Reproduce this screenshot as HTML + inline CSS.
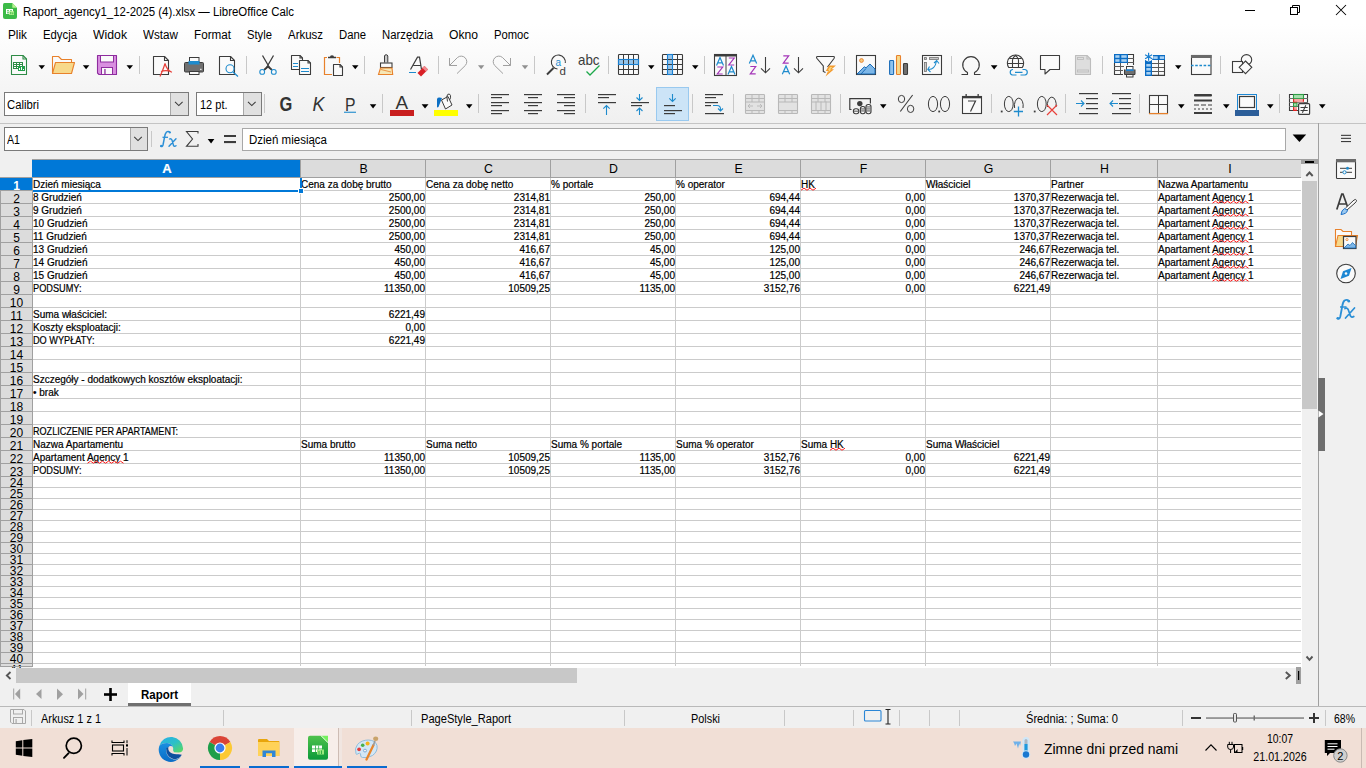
<!DOCTYPE html><html><head><meta charset="utf-8"><style>
*{margin:0;padding:0;box-sizing:border-box}
html,body{width:1366px;height:768px;overflow:hidden;background:#f0f0f0;font-family:"Liberation Sans", sans-serif;color:#000}
.a{position:absolute}
.t{position:absolute;white-space:nowrap;line-height:1}
svg{position:absolute;overflow:visible}
</style></head><body>
<div class="a" style="left:0;top:0;width:1366px;height:123px;background:linear-gradient(#ffffff 0px,#ffffff 24px,#f0f0f0 122px)"></div>
<div class="a" style="left:0;top:123px;width:1366px;height:1px;background:#c4c4c4"></div>
<div class="t" style="left:23px;top:6.34px;font-size:12px;color:#000;font-weight:normal;transform:scaleX(0.9522);transform-origin:left 0;">Raport_agency1_12-2025 (4).xlsx — LibreOffice Calc</div>
<div class="t" style="left:8px;top:29.34px;font-size:12px;color:#000;font-weight:normal;transform:scaleX(0.9822);transform-origin:left 0;">Plik</div>
<div class="t" style="left:43px;top:29.34px;font-size:12px;color:#000;font-weight:normal;transform:scaleX(0.9436);transform-origin:left 0;">Edycja</div>
<div class="t" style="left:93px;top:29.34px;font-size:12px;color:#000;font-weight:normal;transform:scaleX(1.0197);transform-origin:left 0;">Widok</div>
<div class="t" style="left:143px;top:29.34px;font-size:12px;color:#000;font-weight:normal;transform:scaleX(0.9722);transform-origin:left 0;">Wstaw</div>
<div class="t" style="left:194px;top:29.34px;font-size:12px;color:#000;font-weight:normal;transform:scaleX(0.9733);transform-origin:left 0;">Format</div>
<div class="t" style="left:247px;top:29.34px;font-size:12px;color:#000;font-weight:normal;transform:scaleX(0.9368);transform-origin:left 0;">Style</div>
<div class="t" style="left:288px;top:29.34px;font-size:12px;color:#000;font-weight:normal;transform:scaleX(0.9540);transform-origin:left 0;">Arkusz</div>
<div class="t" style="left:339px;top:29.34px;font-size:12px;color:#000;font-weight:normal;transform:scaleX(0.9412);transform-origin:left 0;">Dane</div>
<div class="t" style="left:382px;top:29.34px;font-size:12px;color:#000;font-weight:normal;transform:scaleX(0.9439);transform-origin:left 0;">Narzędzia</div>
<div class="t" style="left:449px;top:29.34px;font-size:12px;color:#000;font-weight:normal;transform:scaleX(1.0109);transform-origin:left 0;">Okno</div>
<div class="t" style="left:494px;top:29.34px;font-size:12px;color:#000;font-weight:normal;transform:scaleX(0.9368);transform-origin:left 0;">Pomoc</div>
<div class="a" style="left:4px;top:127px;width:144px;height:24px;background:#fff;border:1px solid #7a7a7a"></div>
<div class="a" style="left:130px;top:128px;width:17px;height:22px;background:#e0e0e0;border-left:1px solid #a8a8a8"></div>
<div class="t" style="left:7px;top:134.19px;font-size:12.3px;color:#000;font-weight:normal;transform:scaleX(0.8640);transform-origin:left 0;">A1</div>
<div class="a" style="left:151px;top:131px;width:1px;height:16px;background:#c8c8c8;"></div>
<div class="a" style="left:242px;top:128px;width:1044px;height:23px;background:#fff;border:1px solid #a8a8a8"></div>
<div class="t" style="left:249px;top:134.24px;font-size:12px;color:#000;font-weight:normal;transform:scaleX(0.9585);transform-origin:left 0;">Dzień miesiąca</div>
<div class="a" style="left:4px;top:92px;width:185px;height:24px;background:#fff;border:1px solid #7a7a7a"></div>
<div class="a" style="left:170px;top:93px;width:18px;height:22px;background:#e0e0e0;border-left:1px solid #a8a8a8"></div>
<div class="t" style="left:7px;top:98.84px;font-size:12px;color:#000;font-weight:normal;transform:scaleX(0.9407);transform-origin:left 0;">Calibri</div>
<div class="a" style="left:196px;top:92px;width:66px;height:24px;background:#fff;border:1px solid #7a7a7a"></div>
<div class="a" style="left:243px;top:93px;width:18px;height:22px;background:#e0e0e0;border-left:1px solid #a8a8a8"></div>
<div class="t" style="left:199.5px;top:98.84px;font-size:12px;color:#000;font-weight:normal;transform:scaleX(0.9157);transform-origin:left 0;">12 pt.</div>
<svg style="left:0;top:0" width="1366" height="160" viewBox="0 0 1366 160"><path d="M11.5 55.5H23.0L26.5 59.0V74.5H11.5Z" fill="#fafafa" stroke="#2e8b46" stroke-width="1.1" stroke-linejoin="round"/><path d="M23.0 55.5V59.0H26.5" fill="none" stroke="#2e8b46" stroke-width="1.1"/><rect x="13" y="62" width="10" height="7" fill="#2e8b46"/><rect x="14" y="63" width="2" height="1" fill="#fff"/><rect x="14" y="65" width="2" height="1" fill="#fff"/><rect x="14" y="67" width="2" height="1" fill="#fff"/><rect x="17" y="63" width="2" height="1" fill="#fff"/><rect x="17" y="65" width="2" height="1" fill="#fff"/><rect x="17" y="67" width="2" height="1" fill="#fff"/><rect x="20" y="63" width="2" height="1" fill="#fff"/><rect x="20" y="65" width="2" height="1" fill="#fff"/><rect x="20" y="67" width="2" height="1" fill="#fff"/><rect x="18" y="66" width="7" height="5" fill="#22a04a"/><rect x="19" y="68" width="1" height="2" fill="#fff"/><rect x="21" y="67" width="1" height="3" fill="#fff"/><rect x="23" y="69" width="1" height="1" fill="#fff"/><path d="M38.5 65.3H45L41.75 69.3Z" fill="#000"/><path d="M52.5 73.5V56.5H58.5L61.5 59.5H71.5V62" fill="#fafafa" stroke="#e8812b" stroke-width="1.1" stroke-linejoin="round"/><path d="M55.5 62.5H74.5L71.5 73.5H52.5Z" fill="#f7d98b" stroke="#e8812b" stroke-width="1.1" stroke-linejoin="round"/><path d="M82.8 65.2H89.4L86.1 69.2Z" fill="#000"/><path d="M97.5 55.5H116.5V74.5H99L97.5 73Z" fill="#d98fe0" stroke="#8e2d9e" stroke-width="1.1" stroke-linejoin="round"/><rect x="100.5" y="55.5" width="13" height="6.5" fill="#fafafa" stroke="#8e2d9e" stroke-width="1"/><rect x="101.5" y="67.5" width="11" height="7" fill="#fafafa" stroke="#8e2d9e" stroke-width="1"/><rect x="104.3" y="69" width="1.3" height="5.5" fill="#8e2d9e"/><path d="M126.5 65.2H133L129.75 69.2Z" fill="#000"/><rect x="139" y="56" width="1" height="18" fill="#c8c8c8"/><path d="M153.5 56.5H164.5L168.5 60.5V74.5H153.5Z" fill="#fafafa" stroke="#3c3c3c" stroke-width="1.1" stroke-linejoin="round"/><path d="M164.5 56.5V60.5H168.5" fill="none" stroke="#3c3c3c" stroke-width="1.1"/><path d="M165 63.5C164 67 162 72 160 76.5M165 63.5C166 67 168 71 172 72.3M161 71.5C164 70.5 168 70.3 171.5 72" fill="none" stroke="#e8403a" stroke-width="1.2"/><rect x="189.5" y="57.5" width="9.5" height="5" fill="#fafafa" stroke="#3c3c3c" stroke-width="1"/><rect x="184.5" y="62.5" width="19" height="9.5" rx="1" fill="#707070" stroke="#3c3c3c" stroke-width="1"/><rect x="188.5" y="61" width="11" height="3.5" fill="#1e8bcd"/><rect x="189.5" y="71.5" width="9.5" height="3" fill="#fafafa" stroke="#3c3c3c" stroke-width="1"/><rect x="200" y="68.8" width="1.6" height="1" fill="#fff"/><path d="M219.5 56.5H230.5L234.5 60.5V74.5H219.5Z" fill="#fafafa" stroke="#3c3c3c" stroke-width="1.1" stroke-linejoin="round"/><path d="M230.5 56.5V60.5H234.5" fill="none" stroke="#3c3c3c" stroke-width="1.1"/><circle cx="230" cy="68.8" r="4" fill="#fafafa" stroke="#1e8bcd" stroke-width="1.1"/><path d="M233 72L238 76.5" stroke="#1e8bcd" stroke-width="1.2"/><rect x="246" y="56" width="1" height="18" fill="#c8c8c8"/><path d="M262.5 55.5L270 68.5M273.5 55.5L266 68.5" stroke="#3c3c3c" stroke-width="1.3" fill="none"/><path d="M268 66.5L264 70M268 66.5L272 70" stroke="#3c3c3c" stroke-width="1.8"/><circle cx="262.2" cy="71.9" r="2.4" fill="#fafafa" stroke="#1e8bcd" stroke-width="1.1"/><circle cx="273.8" cy="71.9" r="2.4" fill="#fafafa" stroke="#1e8bcd" stroke-width="1.1"/><path d="M291.5 55.5H300.0L302.5 58.0V69.5H291.5Z" fill="#fafafa" stroke="#3c3c3c" stroke-width="1.1" stroke-linejoin="round"/><path d="M300.0 55.5V58.0H302.5" fill="none" stroke="#3c3c3c" stroke-width="1.1"/><rect x="293" y="63" width="5" height="1" fill="#1e8bcd"/><rect x="293" y="66" width="5" height="1" fill="#1e8bcd"/><path d="M299.5 60.5H308.0L310.5 63.0V74.5H299.5Z" fill="#fafafa" stroke="#3c3c3c" stroke-width="1.1" stroke-linejoin="round"/><path d="M308.0 60.5V63.0H310.5" fill="none" stroke="#3c3c3c" stroke-width="1.1"/><rect x="301" y="68" width="8" height="1" fill="#1e8bcd"/><rect x="301" y="71" width="8" height="1" fill="#1e8bcd"/><path d="M327 57.5H324.5V74.5H332M336.5 57.5H339.5V63" fill="none" stroke="#e8812b" stroke-width="1.2"/><path d="M328 57.5H336M330.5 57.5A1.5 1.5 0 0 1 333.5 57.5" fill="none" stroke="#3c3c3c" stroke-width="1.3"/><path d="M333.5 64.5H340.0L342.5 67.0V75.5H333.5Z" fill="#fafafa" stroke="#3c3c3c" stroke-width="1.1" stroke-linejoin="round"/><path d="M340.0 64.5V67.0H342.5" fill="none" stroke="#3c3c3c" stroke-width="1.1"/><path d="M352 65.2H358.5L355.25 69.2Z" fill="#000"/><rect x="364" y="56" width="1" height="18" fill="#c8c8c8"/><path d="M384.5 62.5V56A1.7 1.7 0 0 1 387.8 56V62.5" fill="#c8c8c8" stroke="#3c3c3c" stroke-width="1"/><rect x="380.5" y="63" width="11.5" height="4.5" fill="#fafafa" stroke="#3c3c3c" stroke-width="1.1"/><path d="M380.5 68H392L392.7 74.5H378.5Z" fill="#f6e7b6" stroke="#e8812b" stroke-width="1.1"/><path d="M381 69.5L391 72" stroke="#e8812b" stroke-width=".8"/><path d="M410.5 69.5L417.5 57.2H419.5L421.5 69.5M413.5 65.5H420.5" fill="none" stroke="#3c3c3c" stroke-width="1.2"/><rect x="409" y="72" width="7" height="1" fill="#1e8bcd"/><path d="M421 76.5L417.5 73L424.5 66L428 69.5Z" fill="#d92026"/><path d="M422 67.5L424.5 66L428 69.5L426 71.5Z" fill="#f08a8f"/><rect x="438" y="56" width="1" height="18" fill="#c8c8c8"/><path d="M449.5 58V65.5H457M449.5 65.5L457.5 57.5A5.6 5.6 0 0 1 465.4 65.4L457 73.6" fill="none" stroke="#a0a0a0" stroke-width="1"/><path d="M478 65.2H484.3L481.15 69.2Z" fill="#909090"/><path d="M510.5 58V65.5H503M510.5 65.5L502.5 57.5A5.6 5.6 0 0 0 494.6 65.4L503 73.6" fill="none" stroke="#a0a0a0" stroke-width="1"/><path d="M521.8 65.2H528.2L525.0 69.2Z" fill="#909090"/><rect x="534" y="56" width="1" height="18" fill="#c8c8c8"/><path d="M565.3 63A7 7 0 1 0 557.5 69" fill="none" stroke="#3c3c3c" stroke-width="1.1"/><path d="M547 74.5L553.5 68" stroke="#3c3c3c" stroke-width="2"/><text x="555.5" y="65.5" font-family="Liberation Sans" font-size="10" fill="#1e8bcd">a</text><text x="559.5" y="74.8" font-family="Liberation Sans" font-size="11.5" fill="#3c3c3c">d</text><text x="578" y="65" font-family="Liberation Sans" font-size="14.5" fill="#3c3c3c" textLength="21.5" lengthAdjust="spacingAndGlyphs">abc</text><path d="M586.5 71.5L590 75L599.5 65.5" fill="none" stroke="#1ca84a" stroke-width="1.3"/><rect x="608" y="56" width="1" height="18" fill="#c8c8c8"/><rect x="618" y="59" width="21" height="5" fill="#94c4ea"/><rect x="618.5" y="54.5" width="20" height="20" rx=".8" fill="none" stroke="#3c3c3c" stroke-width="1.1"/><rect x="623" y="54" width="1" height="21" fill="#3c3c3c"/><rect x="618" y="59" width="21" height="1" fill="#3c3c3c"/><rect x="628" y="54" width="1" height="21" fill="#3c3c3c"/><rect x="618" y="64" width="21" height="1" fill="#3c3c3c"/><rect x="633" y="54" width="1" height="21" fill="#3c3c3c"/><rect x="618" y="69" width="21" height="1" fill="#3c3c3c"/><rect x="618.5" y="59.5" width="20" height="5" fill="none" stroke="#1a7fd0" stroke-width="1.1"/><path d="M648 65.2H654.5L651.25 69.2Z" fill="#000"/><rect x="667" y="54" width="5" height="21" fill="#94c4ea"/><rect x="662.5" y="54.5" width="20" height="20" rx=".8" fill="none" stroke="#3c3c3c" stroke-width="1.1"/><rect x="667" y="54" width="1" height="21" fill="#3c3c3c"/><rect x="662" y="59" width="21" height="1" fill="#3c3c3c"/><rect x="672" y="54" width="1" height="21" fill="#3c3c3c"/><rect x="662" y="64" width="21" height="1" fill="#3c3c3c"/><rect x="677" y="54" width="1" height="21" fill="#3c3c3c"/><rect x="662" y="69" width="21" height="1" fill="#3c3c3c"/><rect x="667.5" y="54.5" width="5" height="20" fill="none" stroke="#1a7fd0" stroke-width="1.1"/><path d="M692 65.2H698.5L695.25 69.2Z" fill="#000"/><rect x="704" y="56" width="1" height="18" fill="#c8c8c8"/><rect x="714.5" y="54.5" width="22" height="21" fill="#fafafa" stroke="#3c3c3c" stroke-width="1.1"/><rect x="714" y="54" width="23" height="2.5" fill="#3c3c3c"/><rect x="725.5" y="56" width="1" height="19" fill="#3c3c3c"/><path d="M716.5 65.5L720.0 57.5L723.5 65.5M717.8 62.94H722.2" fill="none" stroke="#1e8bcd" stroke-width="1.2"/><path d="M717.3 67.0H722.7L717.3 74.0H722.7" fill="none" stroke="#a435b8" stroke-width="1.2"/><path d="M728.8 58.0H734.2L728.8 65.0H734.2" fill="none" stroke="#a435b8" stroke-width="1.2"/><path d="M728 74.5L731.5 66.5L735 74.5M729.3 71.94H733.7" fill="none" stroke="#1e8bcd" stroke-width="1.2"/><path d="M749.3 63.599999999999994L753.0 55.3L756.6999999999999 63.599999999999994M750.5999999999999 60.943999999999996H755.4" fill="none" stroke="#1e8bcd" stroke-width="1.2"/><path d="M750.3 66.5H755.7L750.3 73.8H755.7" fill="none" stroke="#a435b8" stroke-width="1.2"/><path d="M765.5 57V72.5M761 68.3L765.5 72.8L770 68.3" fill="none" stroke="#3c3c3c" stroke-width="1.1"/><path d="M783.3 55.8H788.7L783.3 63.099999999999994H788.7" fill="none" stroke="#a435b8" stroke-width="1.2"/><path d="M782.3 74.3L786.0 66L789.6999999999999 74.3M783.5999999999999 71.644H788.4" fill="none" stroke="#1e8bcd" stroke-width="1.2"/><path d="M798.5 57V72.5M794 68.3L798.5 72.8L803 68.3" fill="none" stroke="#3c3c3c" stroke-width="1.1"/><path d="M817.5 56.5H833.5Q835 56.5 834 58.5L827.5 67M825.5 72.5L823.3 71.5V66L816.8 58.3Q816 56.5 817.5 56.5" fill="#fafafa" stroke="#3c3c3c" stroke-width="1.1"/><path d="M829 65.5H836L831.5 69.3H834L825.5 76.5L828 71H825.8Z" fill="#f39a2e"/><path d="M830 67H832.5L830 69.5H831.5L828 72.5L829 70H828Z" fill="#f8d67c"/><rect x="844" y="56" width="1" height="18" fill="#c8c8c8"/><rect x="856.5" y="55.5" width="19" height="19" fill="#fafafa" stroke="#3c3c3c" stroke-width="1.1"/><circle cx="861.5" cy="60.5" r="1.9" fill="#f7c97a" stroke="#e8812b" stroke-width=".9"/><path d="M857 74L864.3 66.8L866 67.8L870 64L875 69V74Z" fill="#7db7e8" stroke="#1b6cb8" stroke-width="1"/><path d="M861 74L866 68.5" stroke="#1b6cb8" stroke-width="1"/><rect x="889.6" y="60.5" width="4" height="14" rx=".8" fill="#8fc3ee" stroke="#1b6cb8" stroke-width="1.1"/><rect x="896.5" y="55.5" width="4" height="19" rx=".8" fill="#f7d98b" stroke="#e8812b" stroke-width="1.1"/><rect x="903.5" y="63.5" width="4" height="11" rx=".8" fill="#707070" stroke="#3c3c3c" stroke-width="1.1"/><rect x="922.5" y="55.5" width="19" height="19" fill="#fafafa" stroke="#3c3c3c" stroke-width="1.1"/><rect x="924.6" y="57.6" width="1.8" height="1.8" fill="#c8c8c8" stroke="#707070" stroke-width=".8"/><rect x="929.5" y="57.6" width="9" height="1.8" fill="#c8c8c8" stroke="#707070" stroke-width=".8"/><rect x="924.6" y="62.5" width="1.8" height="9" fill="#c8c8c8" stroke="#707070" stroke-width=".8"/><path d="M928.5 69.5Q935 69.5 936.5 61M929.5 66.5L927.8 69.5L930.5 72M934 63L936.7 60.5L939 63.5" fill="none" stroke="#1e8bcd" stroke-width="1.1"/><rect x="951" y="56" width="1" height="18" fill="#c8c8c8"/><path d="M961.5 74.5H967.5V72.5A8.3 8.3 0 1 1 974.5 72.5V74.5H980.5" fill="none" stroke="#3c3c3c" stroke-width="1.1"/><path d="M990.8 65.2H997.5L994.15 69.4Z" fill="#000"/><path d="M1008.7 67.5A8.1 8.1 0 1 1 1022.3 67.5Z" fill="#fafafa" stroke="#3c3c3c" stroke-width="1.1"/><path d="M1012.5 67.5V60Q1013 57 1015.5 55.5Q1018 57 1018.5 60V67.5M1007.5 63.5H1023.5M1009.5 58.5H1021.5" fill="none" stroke="#3c3c3c" stroke-width="1.1"/><path d="M1013 69.5H1012.5A2.8 2.8 0 0 0 1012.5 75H1016.5M1022.5 69.5H1025A2.8 2.8 0 0 1 1025 75H1020.5M1015 72.3H1022.5" fill="none" stroke="#1e8bcd" stroke-width="1.2"/><path d="M1040.5 55.5H1059.5V69.5H1050L1045 74V69.5H1040.5Z" fill="#fafafa" stroke="#3c3c3c" stroke-width="1.1" stroke-linejoin="round"/><path d="M1075.5 55.5H1087.0L1090.5 59.0V74.5H1075.5Z" fill="#dedede" stroke="#bdbdbd" stroke-width="1.1" stroke-linejoin="round"/><path d="M1087.0 55.5V59.0H1090.5" fill="none" stroke="#bdbdbd" stroke-width="1.1"/><rect x="1077.5" y="57.5" width="6" height="2" fill="none" stroke="#bdbdbd" stroke-width=".9"/><rect x="1077.5" y="70" width="11" height="2" fill="none" stroke="#bdbdbd" stroke-width=".9"/><rect x="1102" y="56" width="1" height="18" fill="#c8c8c8"/><path d="M1127.5 54.5H1133.5V65M1114.5 63V74.5H1123" fill="none" stroke="#3c3c3c" stroke-width="1.1"/><rect x="1127" y="58" width="7" height="1" fill="#5a5a5a"/><rect x="1114" y="66" width="10" height="1" fill="#5a5a5a"/><rect x="1114" y="70" width="9" height="1" fill="#5a5a5a"/><rect x="1127" y="62" width="7" height="1" fill="#5a5a5a"/><rect x="1120" y="63" width="1" height="11.5" fill="#5a5a5a"/><rect x="1127" y="63" width="1" height="2" fill="#5a5a5a"/><rect x="1114" y="54" width="14" height="9" fill="#0a6cc4"/><rect x="1115.3" y="55.2" width="4.2" height="2.6" fill="#a9d1f2"/><rect x="1121.3" y="55.2" width="5.4" height="2.6" fill="#a9d1f2"/><rect x="1115.3" y="59.2" width="4.2" height="2.6" fill="#a9d1f2"/><rect x="1121.3" y="59.2" width="5.4" height="2.6" fill="#a9d1f2"/><rect x="1126.5" y="66.5" width="6.5" height="4" fill="#fafafa" stroke="#3c3c3c" stroke-width="1"/><path d="M1124.5 69.5V74.5H1135V69.5" fill="#707070" stroke="#3c3c3c" stroke-width="1"/><rect x="1126" y="69.3" width="7.5" height="1.7" fill="#1a7fd0"/><rect x="1126.5" y="74.5" width="6.5" height="2.5" fill="#fafafa" stroke="#3c3c3c" stroke-width="1"/><rect x="1152" y="60" width="13" height="15.8" fill="#fafafa"/><rect x="1152" y="63" width="13" height="1" fill="#5a5a5a"/><rect x="1152" y="67" width="13" height="1" fill="#5a5a5a"/><rect x="1152" y="71" width="13" height="1" fill="#5a5a5a"/><rect x="1158" y="60" width="1" height="16" fill="#5a5a5a"/><path d="M1152 75.4H1164.5V60" fill="none" stroke="#3c3c3c" stroke-width="1.1"/><rect x="1145" y="60" width="7" height="16" fill="#0a6cc4"/><rect x="1152" y="55" width="13" height="5" fill="#0a6cc4"/><rect x="1146.3" y="64" width="4.4" height="2.6" fill="#a9d1f2"/><rect x="1146.3" y="68" width="4.4" height="2.6" fill="#a9d1f2"/><rect x="1146.3" y="72" width="4.4" height="2.6" fill="#a9d1f2"/><rect x="1153.3" y="56.3" width="4.4" height="2.6" fill="#a9d1f2"/><rect x="1159.8" y="56.3" width="4.4" height="2.6" fill="#a9d1f2"/><circle cx="1148.6" cy="56.8" r="4.6" fill="#fafafa"/><path d="M1148.6 52.8V60.8M1145.1 54.8L1152.1 58.8M1145.1 58.8L1152.1 54.8" stroke="#1a7fd0" stroke-width="1.2"/><circle cx="1148.6" cy="56.8" r="1.2" fill="#1a7fd0"/><path d="M1175 65.3H1181.5L1178.25 69.3Z" fill="#000"/><rect x="1191.5" y="55.5" width="19.5" height="19" fill="#fafafa" stroke="#3c3c3c" stroke-width="1.1"/><rect x="1191" y="55" width="20.5" height="3" fill="#6a6a6a"/><path d="M1191 65.5H1212" stroke="#1e8bcd" stroke-width="1.3" stroke-dasharray="2.6 1.6"/><rect x="1220" y="56" width="1" height="18" fill="#c8c8c8"/><circle cx="1246.5" cy="59.8" r="5.2" fill="#fafafa" stroke="#3c3c3c" stroke-width="1.1"/><rect x="1232.5" y="61.5" width="10" height="11" fill="#fafafa" stroke="#3c3c3c" stroke-width="1.1"/><path d="M1245.5 61L1251.8 67.3L1245.5 73.6L1239.2 67.3Z" fill="#fafafa" stroke="#3c3c3c" stroke-width="1.1"/><rect x="264" y="94" width="1" height="19" fill="#c8c8c8"/><text x="279.4" y="111" font-family="Liberation Sans" font-weight="bold" font-size="19.3" fill="#333" textLength="12.8" lengthAdjust="spacingAndGlyphs">G</text><text x="312.5" y="111" font-family="Liberation Sans" font-style="italic" font-size="19.3" fill="#333" textLength="12" lengthAdjust="spacingAndGlyphs">K</text><text x="345" y="110.6" font-family="Liberation Sans" font-size="18.5" fill="#333" textLength="10.5" lengthAdjust="spacingAndGlyphs">P</text><rect x="344" y="111.7" width="12" height="1.1" fill="#1e8bcd"/><path d="M369.8 104.2H376.3L373.05 108.4Z" fill="#000"/><rect x="382" y="94" width="1" height="19" fill="#c8c8c8"/><text x="395.6" y="108.8" font-family="Liberation Sans" font-size="19" fill="#333" textLength="12.6" lengthAdjust="spacingAndGlyphs">A</text><rect x="390" y="110" width="24" height="6" fill="#c81e1e"/><path d="M421.6 104.2H428.5L425.05 108.4Z" fill="#000"/><rect x="434" y="110" width="24" height="6" fill="#ffff00"/><path d="M437 107.5V99Q437.5 97.5 439.5 97.6L442 98L441 100.5L438.5 107Z" fill="#0c6fc4"/><path d="M441.5 100L448 96.5L452 105L445.5 109Z" fill="#fafafa" stroke="#3c3c3c" stroke-width="1"/><path d="M447.5 101.5L446.8 96.5Q447.5 93.5 449.3 94Q451 94.8 450.5 97.8L449.5 100" fill="none" stroke="#3c3c3c" stroke-width="1"/><path d="M466 104.2H472.5L469.25 108.4Z" fill="#000"/><rect x="478" y="94" width="1" height="19" fill="#c8c8c8"/><rect x="491" y="94" width="18" height="1.2" fill="#3c3c3c"/><rect x="491" y="97" width="11" height="1.2" fill="#3c3c3c"/><rect x="491" y="102" width="18" height="1.2" fill="#3c3c3c"/><rect x="491" y="105" width="11" height="1.2" fill="#3c3c3c"/><rect x="491" y="110" width="18" height="1.2" fill="#3c3c3c"/><rect x="491" y="113" width="11" height="1.2" fill="#3c3c3c"/><rect x="524" y="94" width="18" height="1.2" fill="#3c3c3c"/><rect x="528" y="97" width="10" height="1.2" fill="#3c3c3c"/><rect x="524" y="102" width="18" height="1.2" fill="#3c3c3c"/><rect x="528" y="105" width="10" height="1.2" fill="#3c3c3c"/><rect x="524" y="110" width="18" height="1.2" fill="#3c3c3c"/><rect x="528" y="113" width="10" height="1.2" fill="#3c3c3c"/><rect x="557" y="94" width="18" height="1.2" fill="#3c3c3c"/><rect x="564" y="97" width="11" height="1.2" fill="#3c3c3c"/><rect x="557" y="102" width="18" height="1.2" fill="#3c3c3c"/><rect x="564" y="105" width="11" height="1.2" fill="#3c3c3c"/><rect x="557" y="110" width="18" height="1.2" fill="#3c3c3c"/><rect x="564" y="113" width="11" height="1.2" fill="#3c3c3c"/><rect x="585" y="94" width="1" height="19" fill="#c8c8c8"/><rect x="598" y="94" width="18" height="1.2" fill="#3c3c3c"/><rect x="598" y="97" width="11" height="1.2" fill="#3c3c3c"/><rect x="598" y="102" width="18" height="1.2" fill="#3c3c3c"/><path d="M606.5 115V105.5M603.3 108.7L606.5 105.5L609.7 108.7" fill="none" stroke="#1e8bcd" stroke-width="1.1"/><rect x="631" y="102" width="18" height="1.2" fill="#3c3c3c"/><rect x="631" y="105" width="11" height="1.2" fill="#3c3c3c"/><path d="M639.5 94V100.5M636.5 97.5L639.5 100.5L642.5 97.5M639.5 115V108M636.5 111L639.5 108L642.5 111" fill="none" stroke="#1e8bcd" stroke-width="1.1"/><rect x="656.5" y="87.5" width="32" height="33" fill="#cce4f7" stroke="#99c9ef" stroke-width="1"/><rect x="664" y="105" width="11" height="1.2" fill="#3c3c3c"/><rect x="664" y="110" width="18" height="1.2" fill="#3c3c3c"/><rect x="664" y="113" width="11" height="1.2" fill="#3c3c3c"/><path d="M672.5 94V101.5M669.3 98.3L672.5 101.5L675.7 98.3" fill="none" stroke="#1e8bcd" stroke-width="1.1"/><rect x="692" y="94" width="1" height="19" fill="#c8c8c8"/><rect x="705" y="94" width="18" height="1.2" fill="#3c3c3c"/><rect x="705" y="97" width="11" height="1.2" fill="#3c3c3c"/><rect x="705" y="102" width="13" height="1.2" fill="#3c3c3c"/><rect x="705" y="105" width="6" height="1.2" fill="#3c3c3c"/><rect x="705" y="113" width="19" height="1.2" fill="#3c3c3c"/><path d="M713 105.5H717Q720.5 105.5 720.5 109V111M718 108.5L720.5 111L723 108.5" fill="none" stroke="#1e8bcd" stroke-width="1.1"/><rect x="733" y="94" width="1" height="19" fill="#c8c8c8"/><rect x="745.5" y="94.5" width="19" height="19" rx=".8" fill="#e2e2e2" stroke="#b8b8b8" stroke-width="1.1"/><rect x="745" y="98" width="20" height="1" fill="#b8b8b8"/><rect x="745" y="101.5" width="20" height="1" fill="#b8b8b8"/><rect x="745" y="110" width="20" height="1" fill="#b8b8b8"/><rect x="751.5" y="94" width="1" height="8" fill="#b8b8b8"/><rect x="751.5" y="110" width="1" height="4" fill="#b8b8b8"/><rect x="758.5" y="94" width="1" height="8" fill="#b8b8b8"/><rect x="758.5" y="110" width="1" height="4" fill="#b8b8b8"/><path d="M748 106H753M757 106H762M750 104L748 106L750 108M760 104L762 106L760 108" fill="none" stroke="#b8b8b8" stroke-width=".9"/><rect x="778.5" y="94.5" width="19" height="19" rx=".8" fill="#e2e2e2" stroke="#b8b8b8" stroke-width="1.1"/><rect x="778" y="98" width="20" height="1" fill="#b8b8b8"/><rect x="778" y="101.5" width="20" height="1" fill="#b8b8b8"/><rect x="778" y="110" width="20" height="1" fill="#b8b8b8"/><rect x="784.5" y="94" width="1" height="8" fill="#b8b8b8"/><rect x="784.5" y="110" width="1" height="4" fill="#b8b8b8"/><rect x="791.5" y="94" width="1" height="8" fill="#b8b8b8"/><rect x="791.5" y="110" width="1" height="4" fill="#b8b8b8"/><rect x="811.5" y="94.5" width="19" height="19" rx=".8" fill="#e2e2e2" stroke="#b8b8b8" stroke-width="1.1"/><rect x="811" y="98" width="20" height="1" fill="#b8b8b8"/><rect x="811" y="101.5" width="20" height="1" fill="#b8b8b8"/><rect x="811" y="110" width="20" height="1" fill="#b8b8b8"/><rect x="817.5" y="94" width="1" height="8" fill="#b8b8b8"/><rect x="817.5" y="110" width="1" height="4" fill="#b8b8b8"/><rect x="824.5" y="94" width="1" height="8" fill="#b8b8b8"/><rect x="824.5" y="110" width="1" height="4" fill="#b8b8b8"/><rect x="815.5" y="101.5" width="1" height="9" fill="#b8b8b8"/><rect x="820.5" y="101.5" width="1" height="9" fill="#b8b8b8"/><rect x="825.5" y="101.5" width="1" height="9" fill="#b8b8b8"/><rect x="840" y="94" width="1" height="19" fill="#c8c8c8"/><path d="M851.5 109.5H849.8V98.7H870.4V103.5" fill="none" stroke="#3c3c3c" stroke-width="1.2"/><circle cx="859.8" cy="103.6" r="2.7" fill="#3c3c3c"/><rect x="853.4" y="108.7" width="5.399999999999977" height="5.099999999999994" rx="2.2" fill="#fafafa" stroke="#3c3c3c" stroke-width="1.1"/><rect x="853.9" y="110.7" width="4.399999999999977" height=".9" fill="#3c3c3c"/><rect x="860.4" y="106.5" width="4.800000000000068" height="7.299999999999997" rx="2.2" fill="#fafafa" stroke="#3c3c3c" stroke-width="1.1"/><rect x="860.9" y="108.5" width="3.800000000000068" height=".9" fill="#3c3c3c"/><rect x="860.9" y="110.5" width="3.800000000000068" height=".9" fill="#3c3c3c"/><rect x="866" y="104.5" width="5" height="9.299999999999997" rx="2.2" fill="#fafafa" stroke="#3c3c3c" stroke-width="1.1"/><rect x="866.5" y="106.5" width="4" height=".9" fill="#3c3c3c"/><rect x="866.5" y="108.5" width="4" height=".9" fill="#3c3c3c"/><rect x="866.5" y="110.5" width="4" height=".9" fill="#3c3c3c"/><path d="M880 104.2H886.5L883.25 108.4Z" fill="#000"/><ellipse cx="901.5" cy="99" rx="3.2" ry="3.6" fill="none" stroke="#3c3c3c" stroke-width="1"/><ellipse cx="910.6" cy="108.9" rx="3.2" ry="3.6" fill="none" stroke="#3c3c3c" stroke-width="1"/><path d="M900.3 111.5L912.6 95" stroke="#3c3c3c" stroke-width="1.1"/><ellipse cx="933" cy="104" rx="4.6" ry="7.6" fill="none" stroke="#3c3c3c" stroke-width="1"/><ellipse cx="945" cy="104" rx="4.6" ry="7.6" fill="none" stroke="#3c3c3c" stroke-width="1"/><rect x="938.3" y="110.6" width="1.8" height="1.8" fill="#3c3c3c"/><rect x="962.5" y="96.5" width="19" height="17" fill="#fafafa" stroke="#3c3c3c" stroke-width="1.1"/><rect x="962" y="96" width="20" height="2.3" fill="#3c3c3c"/><rect x="965.5" y="94" width="1.3" height="3.5" fill="#3c3c3c"/><rect x="977.5" y="94" width="1.3" height="3.5" fill="#3c3c3c"/><path d="M968 101H975.5L970.5 111.5" fill="none" stroke="#3c3c3c" stroke-width="1.2"/><rect x="991" y="94" width="1" height="19" fill="#c8c8c8"/><rect x="1000.8" y="110.6" width="1.8" height="1.8" fill="#3c3c3c"/><ellipse cx="1008.8" cy="104" rx="4.4" ry="7.6" fill="none" stroke="#3c3c3c" stroke-width="1"/><path d="M1014.6 108A4.4 7.6 0 1 1 1023 108" fill="none" stroke="#3c3c3c" stroke-width="1"/><path d="M1018.5 106.5V116.5M1013.8 111.5H1023" stroke="#1e8bcd" stroke-width="1.3"/><rect x="1033.8" y="110.6" width="1.8" height="1.8" fill="#3c3c3c"/><ellipse cx="1041.8" cy="104" rx="4.4" ry="7.6" fill="none" stroke="#3c3c3c" stroke-width="1"/><path d="M1047.6 107A4.4 7.6 0 1 1 1056 107" fill="none" stroke="#3c3c3c" stroke-width="1"/><path d="M1047 105L1057 115M1057 105L1047 115" stroke="#e8403a" stroke-width="1.2"/><rect x="1065" y="94" width="1" height="19" fill="#c8c8c8"/><rect x="1079" y="93" width="19" height="1.2" fill="#3c3c3c"/><rect x="1079" y="113" width="19" height="1.2" fill="#3c3c3c"/><rect x="1086" y="98" width="12" height="1.2" fill="#3c3c3c"/><rect x="1086" y="103" width="12" height="1.2" fill="#3c3c3c"/><rect x="1086" y="108" width="12" height="1.2" fill="#3c3c3c"/><path d="M1076 103.5H1084M1081 100.5L1084 103.5L1081 106.5" fill="none" stroke="#1e8bcd" stroke-width="1.1"/><rect x="1112" y="93" width="19" height="1.2" fill="#3c3c3c"/><rect x="1112" y="113" width="19" height="1.2" fill="#3c3c3c"/><rect x="1119" y="98" width="12" height="1.2" fill="#3c3c3c"/><rect x="1119" y="103" width="12" height="1.2" fill="#3c3c3c"/><rect x="1119" y="108" width="12" height="1.2" fill="#3c3c3c"/><path d="M1110 103.5H1118M1113 100.5L1110 103.5L1113 106.5" fill="none" stroke="#1e8bcd" stroke-width="1.1"/><rect x="1139" y="94" width="1" height="19" fill="#c8c8c8"/><rect x="1149.5" y="95.5" width="18" height="18" fill="#fafafa" stroke="#3c3c3c" stroke-width="1.1"/><rect x="1158" y="95" width="1" height="19" fill="#3c3c3c"/><rect x="1149" y="104" width="19" height="1" fill="#3c3c3c"/><rect x="1149" y="113" width="19" height="1.2" fill="#e8812b"/><path d="M1178 104.2H1184.6L1181.3 108.4Z" fill="#000"/><rect x="1194" y="94" width="18" height="2.5" rx="1" fill="#3c3c3c"/><rect x="1194" y="99.5" width="18" height="2" fill="#3c3c3c"/><path d="M1194 105H1212" stroke="#3c3c3c" stroke-width="1.1" stroke-dasharray="5 2"/><path d="M1194 109H1212" stroke="#3c3c3c" stroke-width="1" stroke-dasharray="2 2"/><rect x="1194" y="112" width="18" height="2" fill="#3c3c3c"/><path d="M1223 104.2H1229.6L1226.3 108.4Z" fill="#000"/><rect x="1237.5" y="94.5" width="19" height="16" fill="#fafafa" stroke="#1e88d4" stroke-width="1"/><rect x="1239.5" y="96.5" width="15" height="11" fill="#fafafa" stroke="#3c3c3c" stroke-width="1.2"/><rect x="1235" y="110" width="24" height="6" fill="#2c5e99"/><path d="M1267 104.2H1273.6L1270.3 108.4Z" fill="#000"/><rect x="1279" y="94" width="1" height="19" fill="#c8c8c8"/><path d="M1307.5 106V94.5H1289.5V110.5H1298" fill="#fafafa" stroke="#3c3c3c" stroke-width="1.1"/><rect x="1289" y="98" width="19" height="1" fill="#6a6a6a"/><rect x="1289" y="102" width="19" height="1" fill="#6a6a6a"/><rect x="1289" y="106" width="19" height="1" fill="#6a6a6a"/><rect x="1293.5" y="94.5" width="10" height="4.2" fill="#a6e0ad" stroke="#2e9c45" stroke-width="1.1"/><rect x="1293.5" y="99" width="10" height="3.3" fill="#f9a5a5"/><path d="M1293.6 99V102.4H1297M1303.4 99V101.8" fill="none" stroke="#e02020" stroke-width="1.1"/><rect x="1293.5" y="103" width="3.5" height="3.3" fill="#a6e0ad" stroke="#2e9c45" stroke-width="1"/><rect x="1293.5" y="107" width="3.5" height="3.5" fill="#f9a5a5"/><path d="M1293.6 107V110.4H1297" fill="none" stroke="#e02020" stroke-width="1.1"/><rect x="1298.6" y="103.6" width="11" height="10.8" rx="1" fill="#fafafa" stroke="#3c3c3c" stroke-width="1.2"/><path d="M1300.5 107.5H1307.7M1300.5 110.5H1307.7M1305.8 105.3L1302.4 112.8" stroke="#3c3c3c" stroke-width="1.05"/><path d="M1319 104.2H1325.6L1322.3 108.4Z" fill="#000"/><path d="M170 132.3Q168.3 130.8 166.5 132Q165 133.5 164.5 137.5L163 145Q162.5 147 160.8 146.2" fill="none" stroke="#2b8fd6" stroke-width="1.5" stroke-linecap="round"/><circle cx="169.8" cy="132.5" r="1.1" fill="#2b8fd6"/><circle cx="161.2" cy="145.9" r="1.1" fill="#2b8fd6"/><path d="M162.5 137.3H168" stroke="#2b8fd6" stroke-width="1.3"/><path d="M169.5 139Q171 138.2 172 140L173.5 145.5Q174.5 147 176 145.8M176 138.8L169 146.3" fill="none" stroke="#2b8fd6" stroke-width="1.4" stroke-linecap="round"/><path d="M198 133.5V131.5H186.5L192.5 139L186.5 146.3H198V144" fill="none" stroke="#3c3c3c" stroke-width="1.1"/><path d="M207.7 139H214.4L211.05 143.4Z" fill="#000"/><rect x="224" y="135" width="12" height="2" fill="#3c3c3c"/><rect x="224" y="141" width="12" height="2.1" fill="#3c3c3c"/><path d="M1292.6 134.6H1306.2L1299.4 142Z" fill="#000"/><path d="M134.2 136.8L138 140.60000000000002L141.8 136.8" fill="none" stroke="#3a3a3a" stroke-width="1.05"/><path d="M175.0 101.8L178.8 105.6L182.60000000000002 101.8" fill="none" stroke="#3a3a3a" stroke-width="1.05"/><path d="M248.0 101.8L251.8 105.6L255.60000000000002 101.8" fill="none" stroke="#3a3a3a" stroke-width="1.05"/></svg>
<div class="a" style="left:1318px;top:123px;width:1px;height:583px;background:#a0a0a0;"></div>
<div class="a" style="left:32px;top:159px;width:1269px;height:1px;background:#a0a0a0;"></div>
<div class="a" style="left:32px;top:160px;width:1269px;height:17px;background:#dcdcdc;"></div>
<div class="a" style="left:32px;top:160px;width:268px;height:17px;background:#0078d7;"></div>
<div class="a" style="left:0px;top:177px;width:1301px;height:1px;background:#a0a0a0;"></div>
<div class="a" style="left:300px;top:159px;width:1px;height:18px;background:#a0a0a0;"></div>
<div class="a" style="left:425px;top:159px;width:1px;height:18px;background:#a0a0a0;"></div>
<div class="a" style="left:550px;top:159px;width:1px;height:18px;background:#a0a0a0;"></div>
<div class="a" style="left:675px;top:159px;width:1px;height:18px;background:#a0a0a0;"></div>
<div class="a" style="left:800px;top:159px;width:1px;height:18px;background:#a0a0a0;"></div>
<div class="a" style="left:925px;top:159px;width:1px;height:18px;background:#a0a0a0;"></div>
<div class="a" style="left:1050px;top:159px;width:1px;height:18px;background:#a0a0a0;"></div>
<div class="a" style="left:1157px;top:159px;width:1px;height:18px;background:#a0a0a0;"></div>
<div class="t" style="left:-33.0px;width:400px;text-align:center;top:162.40px;font-size:13px;color:#fff;font-weight:bold;-webkit-text-stroke:0.2px #fff;">A</div>
<div class="t" style="left:163.5px;width:400px;text-align:center;top:162.89px;font-size:12.3px;color:#000;font-weight:normal;">B</div>
<div class="t" style="left:288.5px;width:400px;text-align:center;top:162.89px;font-size:12.3px;color:#000;font-weight:normal;">C</div>
<div class="t" style="left:413.5px;width:400px;text-align:center;top:162.89px;font-size:12.3px;color:#000;font-weight:normal;">D</div>
<div class="t" style="left:538.5px;width:400px;text-align:center;top:162.89px;font-size:12.3px;color:#000;font-weight:normal;">E</div>
<div class="t" style="left:663.5px;width:400px;text-align:center;top:162.89px;font-size:12.3px;color:#000;font-weight:normal;">F</div>
<div class="t" style="left:788.5px;width:400px;text-align:center;top:162.89px;font-size:12.3px;color:#000;font-weight:normal;">G</div>
<div class="t" style="left:904.5px;width:400px;text-align:center;top:162.89px;font-size:12.3px;color:#000;font-weight:normal;">H</div>
<div class="t" style="left:1030.0px;width:400px;text-align:center;top:162.89px;font-size:12.3px;color:#000;font-weight:normal;">I</div>
<div class="a" style="left:32px;top:178px;width:1270px;height:490px;background:#fff;"></div>
<div class="a" style="left:0px;top:178px;width:32px;height:488px;background:#dcdcdc;"></div>
<div class="a" style="left:0px;top:177px;width:1px;height:489px;background:#a0a0a0;"></div>
<div class="a" style="left:32px;top:177px;width:1px;height:489px;background:#a0a0a0;"></div>
<div class="a" style="left:0px;top:178px;width:32px;height:12px;background:#0078d7;"></div>
<div class="a" style="left:0px;top:190px;width:32px;height:1px;background:#a0a0a0;"></div>
<div class="a" style="left:33px;top:190px;width:1268px;height:1px;background:#cbcbcb;"></div>
<div class="a" style="left:0px;top:203px;width:32px;height:1px;background:#a0a0a0;"></div>
<div class="a" style="left:33px;top:203px;width:1268px;height:1px;background:#cbcbcb;"></div>
<div class="a" style="left:0px;top:216px;width:32px;height:1px;background:#a0a0a0;"></div>
<div class="a" style="left:33px;top:216px;width:1268px;height:1px;background:#cbcbcb;"></div>
<div class="a" style="left:0px;top:229px;width:32px;height:1px;background:#a0a0a0;"></div>
<div class="a" style="left:33px;top:229px;width:1268px;height:1px;background:#cbcbcb;"></div>
<div class="a" style="left:0px;top:242px;width:32px;height:1px;background:#a0a0a0;"></div>
<div class="a" style="left:33px;top:242px;width:1268px;height:1px;background:#cbcbcb;"></div>
<div class="a" style="left:0px;top:255px;width:32px;height:1px;background:#a0a0a0;"></div>
<div class="a" style="left:33px;top:255px;width:1268px;height:1px;background:#cbcbcb;"></div>
<div class="a" style="left:0px;top:268px;width:32px;height:1px;background:#a0a0a0;"></div>
<div class="a" style="left:33px;top:268px;width:1268px;height:1px;background:#cbcbcb;"></div>
<div class="a" style="left:0px;top:281px;width:32px;height:1px;background:#a0a0a0;"></div>
<div class="a" style="left:33px;top:281px;width:1268px;height:1px;background:#cbcbcb;"></div>
<div class="a" style="left:0px;top:294px;width:32px;height:1px;background:#a0a0a0;"></div>
<div class="a" style="left:33px;top:294px;width:1268px;height:1px;background:#cbcbcb;"></div>
<div class="a" style="left:0px;top:307px;width:32px;height:1px;background:#a0a0a0;"></div>
<div class="a" style="left:33px;top:307px;width:1268px;height:1px;background:#cbcbcb;"></div>
<div class="a" style="left:0px;top:320px;width:32px;height:1px;background:#a0a0a0;"></div>
<div class="a" style="left:33px;top:320px;width:1268px;height:1px;background:#cbcbcb;"></div>
<div class="a" style="left:0px;top:333px;width:32px;height:1px;background:#a0a0a0;"></div>
<div class="a" style="left:33px;top:333px;width:1268px;height:1px;background:#cbcbcb;"></div>
<div class="a" style="left:0px;top:346px;width:32px;height:1px;background:#a0a0a0;"></div>
<div class="a" style="left:33px;top:346px;width:1268px;height:1px;background:#cbcbcb;"></div>
<div class="a" style="left:0px;top:359px;width:32px;height:1px;background:#a0a0a0;"></div>
<div class="a" style="left:33px;top:359px;width:1268px;height:1px;background:#cbcbcb;"></div>
<div class="a" style="left:0px;top:372px;width:32px;height:1px;background:#a0a0a0;"></div>
<div class="a" style="left:33px;top:372px;width:1268px;height:1px;background:#cbcbcb;"></div>
<div class="a" style="left:0px;top:385px;width:32px;height:1px;background:#a0a0a0;"></div>
<div class="a" style="left:33px;top:385px;width:1268px;height:1px;background:#cbcbcb;"></div>
<div class="a" style="left:0px;top:398px;width:32px;height:1px;background:#a0a0a0;"></div>
<div class="a" style="left:33px;top:398px;width:1268px;height:1px;background:#cbcbcb;"></div>
<div class="a" style="left:0px;top:411px;width:32px;height:1px;background:#a0a0a0;"></div>
<div class="a" style="left:33px;top:411px;width:1268px;height:1px;background:#cbcbcb;"></div>
<div class="a" style="left:0px;top:424px;width:32px;height:1px;background:#a0a0a0;"></div>
<div class="a" style="left:33px;top:424px;width:1268px;height:1px;background:#cbcbcb;"></div>
<div class="a" style="left:0px;top:437px;width:32px;height:1px;background:#a0a0a0;"></div>
<div class="a" style="left:33px;top:437px;width:1268px;height:1px;background:#cbcbcb;"></div>
<div class="a" style="left:0px;top:450px;width:32px;height:1px;background:#a0a0a0;"></div>
<div class="a" style="left:33px;top:450px;width:1268px;height:1px;background:#cbcbcb;"></div>
<div class="a" style="left:0px;top:463px;width:32px;height:1px;background:#a0a0a0;"></div>
<div class="a" style="left:33px;top:463px;width:1268px;height:1px;background:#cbcbcb;"></div>
<div class="a" style="left:0px;top:476px;width:32px;height:1px;background:#a0a0a0;"></div>
<div class="a" style="left:33px;top:476px;width:1268px;height:1px;background:#cbcbcb;"></div>
<div class="a" style="left:0px;top:487px;width:32px;height:1px;background:#a0a0a0;"></div>
<div class="a" style="left:33px;top:487px;width:1268px;height:1px;background:#cbcbcb;"></div>
<div class="a" style="left:0px;top:498px;width:32px;height:1px;background:#a0a0a0;"></div>
<div class="a" style="left:33px;top:498px;width:1268px;height:1px;background:#cbcbcb;"></div>
<div class="a" style="left:0px;top:509px;width:32px;height:1px;background:#a0a0a0;"></div>
<div class="a" style="left:33px;top:509px;width:1268px;height:1px;background:#cbcbcb;"></div>
<div class="a" style="left:0px;top:520px;width:32px;height:1px;background:#a0a0a0;"></div>
<div class="a" style="left:33px;top:520px;width:1268px;height:1px;background:#cbcbcb;"></div>
<div class="a" style="left:0px;top:531px;width:32px;height:1px;background:#a0a0a0;"></div>
<div class="a" style="left:33px;top:531px;width:1268px;height:1px;background:#cbcbcb;"></div>
<div class="a" style="left:0px;top:542px;width:32px;height:1px;background:#a0a0a0;"></div>
<div class="a" style="left:33px;top:542px;width:1268px;height:1px;background:#cbcbcb;"></div>
<div class="a" style="left:0px;top:553px;width:32px;height:1px;background:#a0a0a0;"></div>
<div class="a" style="left:33px;top:553px;width:1268px;height:1px;background:#cbcbcb;"></div>
<div class="a" style="left:0px;top:564px;width:32px;height:1px;background:#a0a0a0;"></div>
<div class="a" style="left:33px;top:564px;width:1268px;height:1px;background:#cbcbcb;"></div>
<div class="a" style="left:0px;top:575px;width:32px;height:1px;background:#a0a0a0;"></div>
<div class="a" style="left:33px;top:575px;width:1268px;height:1px;background:#cbcbcb;"></div>
<div class="a" style="left:0px;top:586px;width:32px;height:1px;background:#a0a0a0;"></div>
<div class="a" style="left:33px;top:586px;width:1268px;height:1px;background:#cbcbcb;"></div>
<div class="a" style="left:0px;top:597px;width:32px;height:1px;background:#a0a0a0;"></div>
<div class="a" style="left:33px;top:597px;width:1268px;height:1px;background:#cbcbcb;"></div>
<div class="a" style="left:0px;top:608px;width:32px;height:1px;background:#a0a0a0;"></div>
<div class="a" style="left:33px;top:608px;width:1268px;height:1px;background:#cbcbcb;"></div>
<div class="a" style="left:0px;top:619px;width:32px;height:1px;background:#a0a0a0;"></div>
<div class="a" style="left:33px;top:619px;width:1268px;height:1px;background:#cbcbcb;"></div>
<div class="a" style="left:0px;top:630px;width:32px;height:1px;background:#a0a0a0;"></div>
<div class="a" style="left:33px;top:630px;width:1268px;height:1px;background:#cbcbcb;"></div>
<div class="a" style="left:0px;top:641px;width:32px;height:1px;background:#a0a0a0;"></div>
<div class="a" style="left:33px;top:641px;width:1268px;height:1px;background:#cbcbcb;"></div>
<div class="a" style="left:0px;top:652px;width:32px;height:1px;background:#a0a0a0;"></div>
<div class="a" style="left:33px;top:652px;width:1268px;height:1px;background:#cbcbcb;"></div>
<div class="a" style="left:0px;top:663px;width:32px;height:1px;background:#a0a0a0;"></div>
<div class="a" style="left:33px;top:663px;width:1268px;height:1px;background:#cbcbcb;"></div>
<div class="a" style="left:300px;top:178px;width:1px;height:488px;background:#cbcbcb;"></div>
<div class="a" style="left:425px;top:178px;width:1px;height:488px;background:#cbcbcb;"></div>
<div class="a" style="left:550px;top:178px;width:1px;height:488px;background:#cbcbcb;"></div>
<div class="a" style="left:675px;top:178px;width:1px;height:488px;background:#cbcbcb;"></div>
<div class="a" style="left:800px;top:178px;width:1px;height:488px;background:#cbcbcb;"></div>
<div class="a" style="left:925px;top:178px;width:1px;height:488px;background:#cbcbcb;"></div>
<div class="a" style="left:1050px;top:178px;width:1px;height:488px;background:#cbcbcb;"></div>
<div class="a" style="left:1157px;top:178px;width:1px;height:488px;background:#cbcbcb;"></div>
<div class="t" style="left:-183.5px;width:400px;text-align:center;top:179.84px;font-size:12px;color:#fff;font-weight:bold;">1</div>
<div class="t" style="left:-183.5px;width:400px;text-align:center;top:192.84px;font-size:12px;color:#000;font-weight:normal;">2</div>
<div class="t" style="left:-183.5px;width:400px;text-align:center;top:205.84px;font-size:12px;color:#000;font-weight:normal;">3</div>
<div class="t" style="left:-183.5px;width:400px;text-align:center;top:218.84px;font-size:12px;color:#000;font-weight:normal;">4</div>
<div class="t" style="left:-183.5px;width:400px;text-align:center;top:231.84px;font-size:12px;color:#000;font-weight:normal;">5</div>
<div class="t" style="left:-183.5px;width:400px;text-align:center;top:244.84px;font-size:12px;color:#000;font-weight:normal;">6</div>
<div class="t" style="left:-183.5px;width:400px;text-align:center;top:257.84px;font-size:12px;color:#000;font-weight:normal;">7</div>
<div class="t" style="left:-183.5px;width:400px;text-align:center;top:270.84px;font-size:12px;color:#000;font-weight:normal;">8</div>
<div class="t" style="left:-183.5px;width:400px;text-align:center;top:283.84px;font-size:12px;color:#000;font-weight:normal;">9</div>
<div class="t" style="left:-183.5px;width:400px;text-align:center;top:296.84px;font-size:12px;color:#000;font-weight:normal;">10</div>
<div class="t" style="left:-183.5px;width:400px;text-align:center;top:309.84px;font-size:12px;color:#000;font-weight:normal;">11</div>
<div class="t" style="left:-183.5px;width:400px;text-align:center;top:322.84px;font-size:12px;color:#000;font-weight:normal;">12</div>
<div class="t" style="left:-183.5px;width:400px;text-align:center;top:335.84px;font-size:12px;color:#000;font-weight:normal;">13</div>
<div class="t" style="left:-183.5px;width:400px;text-align:center;top:348.84px;font-size:12px;color:#000;font-weight:normal;">14</div>
<div class="t" style="left:-183.5px;width:400px;text-align:center;top:361.84px;font-size:12px;color:#000;font-weight:normal;">15</div>
<div class="t" style="left:-183.5px;width:400px;text-align:center;top:374.84px;font-size:12px;color:#000;font-weight:normal;">16</div>
<div class="t" style="left:-183.5px;width:400px;text-align:center;top:387.84px;font-size:12px;color:#000;font-weight:normal;">17</div>
<div class="t" style="left:-183.5px;width:400px;text-align:center;top:400.84px;font-size:12px;color:#000;font-weight:normal;">18</div>
<div class="t" style="left:-183.5px;width:400px;text-align:center;top:413.84px;font-size:12px;color:#000;font-weight:normal;">19</div>
<div class="t" style="left:-183.5px;width:400px;text-align:center;top:426.84px;font-size:12px;color:#000;font-weight:normal;">20</div>
<div class="t" style="left:-183.5px;width:400px;text-align:center;top:439.84px;font-size:12px;color:#000;font-weight:normal;">21</div>
<div class="t" style="left:-183.5px;width:400px;text-align:center;top:452.84px;font-size:12px;color:#000;font-weight:normal;">22</div>
<div class="t" style="left:-183.5px;width:400px;text-align:center;top:465.84px;font-size:12px;color:#000;font-weight:normal;">23</div>
<div class="t" style="left:-183.5px;width:400px;text-align:center;top:476.84px;font-size:12px;color:#000;font-weight:normal;">24</div>
<div class="t" style="left:-183.5px;width:400px;text-align:center;top:487.84px;font-size:12px;color:#000;font-weight:normal;">25</div>
<div class="t" style="left:-183.5px;width:400px;text-align:center;top:498.84px;font-size:12px;color:#000;font-weight:normal;">26</div>
<div class="t" style="left:-183.5px;width:400px;text-align:center;top:509.84px;font-size:12px;color:#000;font-weight:normal;">27</div>
<div class="t" style="left:-183.5px;width:400px;text-align:center;top:520.84px;font-size:12px;color:#000;font-weight:normal;">28</div>
<div class="t" style="left:-183.5px;width:400px;text-align:center;top:531.84px;font-size:12px;color:#000;font-weight:normal;">29</div>
<div class="t" style="left:-183.5px;width:400px;text-align:center;top:542.84px;font-size:12px;color:#000;font-weight:normal;">30</div>
<div class="t" style="left:-183.5px;width:400px;text-align:center;top:553.84px;font-size:12px;color:#000;font-weight:normal;">31</div>
<div class="t" style="left:-183.5px;width:400px;text-align:center;top:564.84px;font-size:12px;color:#000;font-weight:normal;">32</div>
<div class="t" style="left:-183.5px;width:400px;text-align:center;top:575.84px;font-size:12px;color:#000;font-weight:normal;">33</div>
<div class="t" style="left:-183.5px;width:400px;text-align:center;top:586.84px;font-size:12px;color:#000;font-weight:normal;">34</div>
<div class="t" style="left:-183.5px;width:400px;text-align:center;top:597.84px;font-size:12px;color:#000;font-weight:normal;">35</div>
<div class="t" style="left:-183.5px;width:400px;text-align:center;top:608.84px;font-size:12px;color:#000;font-weight:normal;">36</div>
<div class="t" style="left:-183.5px;width:400px;text-align:center;top:619.84px;font-size:12px;color:#000;font-weight:normal;">37</div>
<div class="t" style="left:-183.5px;width:400px;text-align:center;top:630.84px;font-size:12px;color:#000;font-weight:normal;">38</div>
<div class="t" style="left:-183.5px;width:400px;text-align:center;top:641.84px;font-size:12px;color:#000;font-weight:normal;">39</div>
<div class="t" style="left:-183.5px;width:400px;text-align:center;top:652.84px;font-size:12px;color:#000;font-weight:normal;">40</div>
<div class="t" style="left:-183.5px;width:400px;text-align:center;top:663.84px;font-size:12px;color:#000;font-weight:normal;">41</div>
<div class="t" style="left:33px;top:179.53px;font-size:10px;color:#000;font-weight:normal;-webkit-text-stroke:0.2px #000;">Dzień miesiąca</div>
<div class="t" style="left:301px;top:179.53px;font-size:10px;color:#000;font-weight:normal;-webkit-text-stroke:0.2px #000;">Cena za dobę brutto</div>
<div class="t" style="left:426px;top:179.53px;font-size:10px;color:#000;font-weight:normal;-webkit-text-stroke:0.2px #000;">Cena za dobę netto</div>
<div class="t" style="left:551px;top:179.53px;font-size:10px;color:#000;font-weight:normal;-webkit-text-stroke:0.2px #000;">% portale</div>
<div class="t" style="left:676px;top:179.53px;font-size:10px;color:#000;font-weight:normal;-webkit-text-stroke:0.2px #000;">% operator</div>
<div class="t" style="left:801px;top:179.53px;font-size:10px;color:#000;font-weight:normal;-webkit-text-stroke:0.2px #000;">HK</div>
<div class="t" style="left:926px;top:179.53px;font-size:10px;color:#000;font-weight:normal;-webkit-text-stroke:0.2px #000;">Właściciel</div>
<div class="t" style="left:1051px;top:179.53px;font-size:10px;color:#000;font-weight:normal;-webkit-text-stroke:0.2px #000;">Partner</div>
<div class="t" style="left:1158px;top:179.53px;font-size:10px;color:#000;font-weight:normal;-webkit-text-stroke:0.2px #000;">Nazwa Apartamentu</div>
<div class="t" style="left:33px;top:192.53px;font-size:10px;color:#000;font-weight:normal;-webkit-text-stroke:0.2px #000;">8 Grudzień</div>
<div class="t" style="right:941px;top:192.53px;font-size:10px;color:#000;font-weight:normal;-webkit-text-stroke:0.2px #000;">2500,00</div>
<div class="t" style="right:816px;top:192.53px;font-size:10px;color:#000;font-weight:normal;-webkit-text-stroke:0.2px #000;">2314,81</div>
<div class="t" style="right:691px;top:192.53px;font-size:10px;color:#000;font-weight:normal;-webkit-text-stroke:0.2px #000;">250,00</div>
<div class="t" style="right:566px;top:192.53px;font-size:10px;color:#000;font-weight:normal;-webkit-text-stroke:0.2px #000;">694,44</div>
<div class="t" style="right:441px;top:192.53px;font-size:10px;color:#000;font-weight:normal;-webkit-text-stroke:0.2px #000;">0,00</div>
<div class="t" style="right:316px;top:192.53px;font-size:10px;color:#000;font-weight:normal;-webkit-text-stroke:0.2px #000;">1370,37</div>
<div class="t" style="left:1051px;top:192.53px;font-size:10px;color:#000;font-weight:normal;-webkit-text-stroke:0.2px #000;">Rezerwacja tel.</div>
<div class="t" style="left:1158px;top:192.53px;font-size:10px;color:#000;font-weight:normal;-webkit-text-stroke:0.2px #000;">Apartament Agency 1</div>
<div class="t" style="left:33px;top:205.53px;font-size:10px;color:#000;font-weight:normal;-webkit-text-stroke:0.2px #000;">9 Grudzień</div>
<div class="t" style="right:941px;top:205.53px;font-size:10px;color:#000;font-weight:normal;-webkit-text-stroke:0.2px #000;">2500,00</div>
<div class="t" style="right:816px;top:205.53px;font-size:10px;color:#000;font-weight:normal;-webkit-text-stroke:0.2px #000;">2314,81</div>
<div class="t" style="right:691px;top:205.53px;font-size:10px;color:#000;font-weight:normal;-webkit-text-stroke:0.2px #000;">250,00</div>
<div class="t" style="right:566px;top:205.53px;font-size:10px;color:#000;font-weight:normal;-webkit-text-stroke:0.2px #000;">694,44</div>
<div class="t" style="right:441px;top:205.53px;font-size:10px;color:#000;font-weight:normal;-webkit-text-stroke:0.2px #000;">0,00</div>
<div class="t" style="right:316px;top:205.53px;font-size:10px;color:#000;font-weight:normal;-webkit-text-stroke:0.2px #000;">1370,37</div>
<div class="t" style="left:1051px;top:205.53px;font-size:10px;color:#000;font-weight:normal;-webkit-text-stroke:0.2px #000;">Rezerwacja tel.</div>
<div class="t" style="left:1158px;top:205.53px;font-size:10px;color:#000;font-weight:normal;-webkit-text-stroke:0.2px #000;">Apartament Agency 1</div>
<div class="t" style="left:33px;top:218.53px;font-size:10px;color:#000;font-weight:normal;-webkit-text-stroke:0.2px #000;">10 Grudzień</div>
<div class="t" style="right:941px;top:218.53px;font-size:10px;color:#000;font-weight:normal;-webkit-text-stroke:0.2px #000;">2500,00</div>
<div class="t" style="right:816px;top:218.53px;font-size:10px;color:#000;font-weight:normal;-webkit-text-stroke:0.2px #000;">2314,81</div>
<div class="t" style="right:691px;top:218.53px;font-size:10px;color:#000;font-weight:normal;-webkit-text-stroke:0.2px #000;">250,00</div>
<div class="t" style="right:566px;top:218.53px;font-size:10px;color:#000;font-weight:normal;-webkit-text-stroke:0.2px #000;">694,44</div>
<div class="t" style="right:441px;top:218.53px;font-size:10px;color:#000;font-weight:normal;-webkit-text-stroke:0.2px #000;">0,00</div>
<div class="t" style="right:316px;top:218.53px;font-size:10px;color:#000;font-weight:normal;-webkit-text-stroke:0.2px #000;">1370,37</div>
<div class="t" style="left:1051px;top:218.53px;font-size:10px;color:#000;font-weight:normal;-webkit-text-stroke:0.2px #000;">Rezerwacja tel.</div>
<div class="t" style="left:1158px;top:218.53px;font-size:10px;color:#000;font-weight:normal;-webkit-text-stroke:0.2px #000;">Apartament Agency 1</div>
<div class="t" style="left:33px;top:231.53px;font-size:10px;color:#000;font-weight:normal;-webkit-text-stroke:0.2px #000;">11 Grudzień</div>
<div class="t" style="right:941px;top:231.53px;font-size:10px;color:#000;font-weight:normal;-webkit-text-stroke:0.2px #000;">2500,00</div>
<div class="t" style="right:816px;top:231.53px;font-size:10px;color:#000;font-weight:normal;-webkit-text-stroke:0.2px #000;">2314,81</div>
<div class="t" style="right:691px;top:231.53px;font-size:10px;color:#000;font-weight:normal;-webkit-text-stroke:0.2px #000;">250,00</div>
<div class="t" style="right:566px;top:231.53px;font-size:10px;color:#000;font-weight:normal;-webkit-text-stroke:0.2px #000;">694,44</div>
<div class="t" style="right:441px;top:231.53px;font-size:10px;color:#000;font-weight:normal;-webkit-text-stroke:0.2px #000;">0,00</div>
<div class="t" style="right:316px;top:231.53px;font-size:10px;color:#000;font-weight:normal;-webkit-text-stroke:0.2px #000;">1370,37</div>
<div class="t" style="left:1051px;top:231.53px;font-size:10px;color:#000;font-weight:normal;-webkit-text-stroke:0.2px #000;">Rezerwacja tel.</div>
<div class="t" style="left:1158px;top:231.53px;font-size:10px;color:#000;font-weight:normal;-webkit-text-stroke:0.2px #000;">Apartament Agency 1</div>
<div class="t" style="left:33px;top:244.53px;font-size:10px;color:#000;font-weight:normal;-webkit-text-stroke:0.2px #000;">13 Grudzień</div>
<div class="t" style="right:941px;top:244.53px;font-size:10px;color:#000;font-weight:normal;-webkit-text-stroke:0.2px #000;">450,00</div>
<div class="t" style="right:816px;top:244.53px;font-size:10px;color:#000;font-weight:normal;-webkit-text-stroke:0.2px #000;">416,67</div>
<div class="t" style="right:691px;top:244.53px;font-size:10px;color:#000;font-weight:normal;-webkit-text-stroke:0.2px #000;">45,00</div>
<div class="t" style="right:566px;top:244.53px;font-size:10px;color:#000;font-weight:normal;-webkit-text-stroke:0.2px #000;">125,00</div>
<div class="t" style="right:441px;top:244.53px;font-size:10px;color:#000;font-weight:normal;-webkit-text-stroke:0.2px #000;">0,00</div>
<div class="t" style="right:316px;top:244.53px;font-size:10px;color:#000;font-weight:normal;-webkit-text-stroke:0.2px #000;">246,67</div>
<div class="t" style="left:1051px;top:244.53px;font-size:10px;color:#000;font-weight:normal;-webkit-text-stroke:0.2px #000;">Rezerwacja tel.</div>
<div class="t" style="left:1158px;top:244.53px;font-size:10px;color:#000;font-weight:normal;-webkit-text-stroke:0.2px #000;">Apartament Agency 1</div>
<div class="t" style="left:33px;top:257.54px;font-size:10px;color:#000;font-weight:normal;-webkit-text-stroke:0.2px #000;">14 Grudzień</div>
<div class="t" style="right:941px;top:257.54px;font-size:10px;color:#000;font-weight:normal;-webkit-text-stroke:0.2px #000;">450,00</div>
<div class="t" style="right:816px;top:257.54px;font-size:10px;color:#000;font-weight:normal;-webkit-text-stroke:0.2px #000;">416,67</div>
<div class="t" style="right:691px;top:257.54px;font-size:10px;color:#000;font-weight:normal;-webkit-text-stroke:0.2px #000;">45,00</div>
<div class="t" style="right:566px;top:257.54px;font-size:10px;color:#000;font-weight:normal;-webkit-text-stroke:0.2px #000;">125,00</div>
<div class="t" style="right:441px;top:257.54px;font-size:10px;color:#000;font-weight:normal;-webkit-text-stroke:0.2px #000;">0,00</div>
<div class="t" style="right:316px;top:257.54px;font-size:10px;color:#000;font-weight:normal;-webkit-text-stroke:0.2px #000;">246,67</div>
<div class="t" style="left:1051px;top:257.54px;font-size:10px;color:#000;font-weight:normal;-webkit-text-stroke:0.2px #000;">Rezerwacja tel.</div>
<div class="t" style="left:1158px;top:257.54px;font-size:10px;color:#000;font-weight:normal;-webkit-text-stroke:0.2px #000;">Apartament Agency 1</div>
<div class="t" style="left:33px;top:270.54px;font-size:10px;color:#000;font-weight:normal;-webkit-text-stroke:0.2px #000;">15 Grudzień</div>
<div class="t" style="right:941px;top:270.54px;font-size:10px;color:#000;font-weight:normal;-webkit-text-stroke:0.2px #000;">450,00</div>
<div class="t" style="right:816px;top:270.54px;font-size:10px;color:#000;font-weight:normal;-webkit-text-stroke:0.2px #000;">416,67</div>
<div class="t" style="right:691px;top:270.54px;font-size:10px;color:#000;font-weight:normal;-webkit-text-stroke:0.2px #000;">45,00</div>
<div class="t" style="right:566px;top:270.54px;font-size:10px;color:#000;font-weight:normal;-webkit-text-stroke:0.2px #000;">125,00</div>
<div class="t" style="right:441px;top:270.54px;font-size:10px;color:#000;font-weight:normal;-webkit-text-stroke:0.2px #000;">0,00</div>
<div class="t" style="right:316px;top:270.54px;font-size:10px;color:#000;font-weight:normal;-webkit-text-stroke:0.2px #000;">246,67</div>
<div class="t" style="left:1051px;top:270.54px;font-size:10px;color:#000;font-weight:normal;-webkit-text-stroke:0.2px #000;">Rezerwacja tel.</div>
<div class="t" style="left:1158px;top:270.54px;font-size:10px;color:#000;font-weight:normal;-webkit-text-stroke:0.2px #000;">Apartament Agency 1</div>
<div class="t" style="left:33px;top:283.54px;font-size:10px;color:#000;font-weight:normal;transform:scaleX(0.9186);transform-origin:left 0;-webkit-text-stroke:0.2px #000;">PODSUMY:</div>
<div class="t" style="right:941px;top:283.54px;font-size:10px;color:#000;font-weight:normal;-webkit-text-stroke:0.2px #000;">11350,00</div>
<div class="t" style="right:816px;top:283.54px;font-size:10px;color:#000;font-weight:normal;-webkit-text-stroke:0.2px #000;">10509,25</div>
<div class="t" style="right:691px;top:283.54px;font-size:10px;color:#000;font-weight:normal;-webkit-text-stroke:0.2px #000;">1135,00</div>
<div class="t" style="right:566px;top:283.54px;font-size:10px;color:#000;font-weight:normal;-webkit-text-stroke:0.2px #000;">3152,76</div>
<div class="t" style="right:441px;top:283.54px;font-size:10px;color:#000;font-weight:normal;-webkit-text-stroke:0.2px #000;">0,00</div>
<div class="t" style="right:316px;top:283.54px;font-size:10px;color:#000;font-weight:normal;-webkit-text-stroke:0.2px #000;">6221,49</div>
<div class="t" style="left:33px;top:309.54px;font-size:10px;color:#000;font-weight:normal;-webkit-text-stroke:0.2px #000;">Suma właściciel:</div>
<div class="t" style="right:941px;top:309.54px;font-size:10px;color:#000;font-weight:normal;-webkit-text-stroke:0.2px #000;">6221,49</div>
<div class="t" style="left:33px;top:322.54px;font-size:10px;color:#000;font-weight:normal;-webkit-text-stroke:0.2px #000;">Koszty eksploatacji:</div>
<div class="t" style="right:941px;top:322.54px;font-size:10px;color:#000;font-weight:normal;-webkit-text-stroke:0.2px #000;">0,00</div>
<div class="t" style="left:33px;top:335.54px;font-size:10px;color:#000;font-weight:normal;transform:scaleX(0.9171);transform-origin:left 0;-webkit-text-stroke:0.2px #000;">DO WYPŁATY:</div>
<div class="t" style="right:941px;top:335.54px;font-size:10px;color:#000;font-weight:normal;-webkit-text-stroke:0.2px #000;">6221,49</div>
<div class="t" style="left:33px;top:374.54px;font-size:10px;color:#000;font-weight:normal;-webkit-text-stroke:0.2px #000;">Szczegóły - dodatkowych kosztów eksploatacji:</div>
<div class="t" style="left:33px;top:387.54px;font-size:10px;color:#000;font-weight:normal;-webkit-text-stroke:0.2px #000;">• brak</div>
<div class="t" style="left:33px;top:426.54px;font-size:10px;color:#000;font-weight:normal;transform:scaleX(0.9061);transform-origin:left 0;-webkit-text-stroke:0.2px #000;">ROZLICZENIE PER APARTAMENT:</div>
<div class="t" style="left:33px;top:439.54px;font-size:10px;color:#000;font-weight:normal;-webkit-text-stroke:0.2px #000;">Nazwa Apartamentu</div>
<div class="t" style="left:301px;top:439.54px;font-size:10px;color:#000;font-weight:normal;-webkit-text-stroke:0.2px #000;">Suma brutto</div>
<div class="t" style="left:426px;top:439.54px;font-size:10px;color:#000;font-weight:normal;-webkit-text-stroke:0.2px #000;">Suma netto</div>
<div class="t" style="left:551px;top:439.54px;font-size:10px;color:#000;font-weight:normal;-webkit-text-stroke:0.2px #000;">Suma % portale</div>
<div class="t" style="left:676px;top:439.54px;font-size:10px;color:#000;font-weight:normal;-webkit-text-stroke:0.2px #000;">Suma % operator</div>
<div class="t" style="left:801px;top:439.54px;font-size:10px;color:#000;font-weight:normal;-webkit-text-stroke:0.2px #000;">Suma HK</div>
<div class="t" style="left:926px;top:439.54px;font-size:10px;color:#000;font-weight:normal;-webkit-text-stroke:0.2px #000;">Suma Właściciel</div>
<div class="t" style="left:33px;top:452.54px;font-size:10px;color:#000;font-weight:normal;-webkit-text-stroke:0.2px #000;">Apartament Agency 1</div>
<div class="t" style="right:941px;top:452.54px;font-size:10px;color:#000;font-weight:normal;-webkit-text-stroke:0.2px #000;">11350,00</div>
<div class="t" style="right:816px;top:452.54px;font-size:10px;color:#000;font-weight:normal;-webkit-text-stroke:0.2px #000;">10509,25</div>
<div class="t" style="right:691px;top:452.54px;font-size:10px;color:#000;font-weight:normal;-webkit-text-stroke:0.2px #000;">1135,00</div>
<div class="t" style="right:566px;top:452.54px;font-size:10px;color:#000;font-weight:normal;-webkit-text-stroke:0.2px #000;">3152,76</div>
<div class="t" style="right:441px;top:452.54px;font-size:10px;color:#000;font-weight:normal;-webkit-text-stroke:0.2px #000;">0,00</div>
<div class="t" style="right:316px;top:452.54px;font-size:10px;color:#000;font-weight:normal;-webkit-text-stroke:0.2px #000;">6221,49</div>
<div class="t" style="left:33px;top:465.54px;font-size:10px;color:#000;font-weight:normal;transform:scaleX(0.9186);transform-origin:left 0;-webkit-text-stroke:0.2px #000;">PODSUMY:</div>
<div class="t" style="right:941px;top:465.54px;font-size:10px;color:#000;font-weight:normal;-webkit-text-stroke:0.2px #000;">11350,00</div>
<div class="t" style="right:816px;top:465.54px;font-size:10px;color:#000;font-weight:normal;-webkit-text-stroke:0.2px #000;">10509,25</div>
<div class="t" style="right:691px;top:465.54px;font-size:10px;color:#000;font-weight:normal;-webkit-text-stroke:0.2px #000;">1135,00</div>
<div class="t" style="right:566px;top:465.54px;font-size:10px;color:#000;font-weight:normal;-webkit-text-stroke:0.2px #000;">3152,76</div>
<div class="t" style="right:441px;top:465.54px;font-size:10px;color:#000;font-weight:normal;-webkit-text-stroke:0.2px #000;">0,00</div>
<div class="t" style="right:316px;top:465.54px;font-size:10px;color:#000;font-weight:normal;-webkit-text-stroke:0.2px #000;">6221,49</div>
<svg style="left:0;top:0" width="1366" height="700" viewBox="0 0 1366 700"><path d="M801 190.2 L804.0 188.2 L807.0 190.2 L810.0 188.2 L813.0 190.2 L816.0 188.2" fill="none" stroke="#ff2020" stroke-width="1"/><path d="M830 450.2 L833.0 448.2 L836.0 450.2 L839.0 448.2 L842.0 450.2 L845.0 448.2" fill="none" stroke="#ff2020" stroke-width="1"/><path d="M1212.5 203.2 L1215.5 201.2 L1218.5 203.2 L1221.5 201.2 L1224.5 203.2 L1227.5 201.2 L1230.5 203.2 L1233.5 201.2 L1236.5 203.2 L1239.5 201.2 L1242.5 203.2 L1245.5 201.2 L1248.5 203.2" fill="none" stroke="#ff2020" stroke-width="1"/><path d="M1212.5 216.2 L1215.5 214.2 L1218.5 216.2 L1221.5 214.2 L1224.5 216.2 L1227.5 214.2 L1230.5 216.2 L1233.5 214.2 L1236.5 216.2 L1239.5 214.2 L1242.5 216.2 L1245.5 214.2 L1248.5 216.2" fill="none" stroke="#ff2020" stroke-width="1"/><path d="M1212.5 229.2 L1215.5 227.2 L1218.5 229.2 L1221.5 227.2 L1224.5 229.2 L1227.5 227.2 L1230.5 229.2 L1233.5 227.2 L1236.5 229.2 L1239.5 227.2 L1242.5 229.2 L1245.5 227.2 L1248.5 229.2" fill="none" stroke="#ff2020" stroke-width="1"/><path d="M1212.5 242.2 L1215.5 240.2 L1218.5 242.2 L1221.5 240.2 L1224.5 242.2 L1227.5 240.2 L1230.5 242.2 L1233.5 240.2 L1236.5 242.2 L1239.5 240.2 L1242.5 242.2 L1245.5 240.2 L1248.5 242.2" fill="none" stroke="#ff2020" stroke-width="1"/><path d="M1212.5 255.2 L1215.5 253.2 L1218.5 255.2 L1221.5 253.2 L1224.5 255.2 L1227.5 253.2 L1230.5 255.2 L1233.5 253.2 L1236.5 255.2 L1239.5 253.2 L1242.5 255.2 L1245.5 253.2 L1248.5 255.2" fill="none" stroke="#ff2020" stroke-width="1"/><path d="M1212.5 268.2 L1215.5 266.2 L1218.5 268.2 L1221.5 266.2 L1224.5 268.2 L1227.5 266.2 L1230.5 268.2 L1233.5 266.2 L1236.5 268.2 L1239.5 266.2 L1242.5 268.2 L1245.5 266.2 L1248.5 268.2" fill="none" stroke="#ff2020" stroke-width="1"/><path d="M1212.5 281.2 L1215.5 279.2 L1218.5 281.2 L1221.5 279.2 L1224.5 281.2 L1227.5 279.2 L1230.5 281.2 L1233.5 279.2 L1236.5 281.2 L1239.5 279.2 L1242.5 281.2 L1245.5 279.2 L1248.5 281.2" fill="none" stroke="#ff2020" stroke-width="1"/><path d="M87.5 463.2 L90.5 461.2 L93.5 463.2 L96.5 461.2 L99.5 463.2 L102.5 461.2 L105.5 463.2 L108.5 461.2 L111.5 463.2 L114.5 461.2 L117.5 463.2 L120.5 461.2 L123.5 463.2" fill="none" stroke="#ff2020" stroke-width="1"/></svg>
<div class="a" style="left:300px;top:178px;width:2px;height:10px;background:#0078d7;"></div>
<div class="a" style="left:33px;top:190px;width:265px;height:2px;background:#0078d7;"></div>
<div class="a" style="left:298px;top:188px;width:6px;height:6px;background:#fff;"></div>
<div class="a" style="left:299px;top:189px;width:4px;height:4px;background:#0078d7;"></div>
<div class="a" style="left:1302px;top:159px;width:16px;height:509px;background:#f0f0f0;"></div>
<div class="a" style="left:1301px;top:159px;width:17px;height:5px;background:#a0a0a0;"></div>
<div class="a" style="left:1305px;top:161px;width:9px;height:2px;background:#000;"></div>
<div class="a" style="left:1302px;top:181px;width:15px;height:228px;background:#c8c8c8;"></div>
<div class="a" style="left:1318px;top:378px;width:7px;height:73px;background:#6e6e6e;"></div>
<div class="a" style="left:0px;top:668px;width:1302px;height:15px;background:#f0f0f0;"></div>
<div class="a" style="left:0px;top:666px;width:33px;height:1px;background:#a0a0a0;"></div>
<div class="a" style="left:16px;top:668px;width:561px;height:15px;background:#c8c8c8;"></div>
<div class="a" style="left:0px;top:683px;width:1318px;height:23px;background:#f0f0f0;"></div>
<div class="a" style="left:128px;top:683px;width:63px;height:20px;background:#fff;"></div>
<div class="a" style="left:128px;top:703px;width:63px;height:3px;background:#707070;"></div>
<div class="t" style="left:140.7px;top:688.59px;font-size:12.3px;color:#000;font-weight:bold;transform:scaleX(0.9338);transform-origin:left 0;">Raport</div>
<div class="a" style="left:0px;top:706px;width:1366px;height:1px;background:#b9b9b9;"></div>
<div class="a" style="left:0px;top:707px;width:1366px;height:21px;background:#f0f0f0;"></div>
<div class="a" style="left:31px;top:710px;width:1px;height:16px;background:#c8c8c8;"></div>
<div class="a" style="left:223px;top:710px;width:1px;height:16px;background:#c8c8c8;"></div>
<div class="a" style="left:411px;top:710px;width:1px;height:16px;background:#c8c8c8;"></div>
<div class="a" style="left:624px;top:710px;width:1px;height:16px;background:#c8c8c8;"></div>
<div class="a" style="left:784px;top:710px;width:1px;height:16px;background:#c8c8c8;"></div>
<div class="a" style="left:853px;top:710px;width:1px;height:16px;background:#c8c8c8;"></div>
<div class="a" style="left:899px;top:710px;width:1px;height:16px;background:#c8c8c8;"></div>
<div class="a" style="left:929px;top:710px;width:1px;height:16px;background:#c8c8c8;"></div>
<div class="a" style="left:959px;top:710px;width:1px;height:16px;background:#c8c8c8;"></div>
<div class="a" style="left:1182px;top:710px;width:1px;height:16px;background:#c8c8c8;"></div>
<div class="a" style="left:1325px;top:710px;width:1px;height:16px;background:#c8c8c8;"></div>
<div class="t" style="left:41px;top:712.84px;font-size:12px;color:#000;font-weight:normal;transform:scaleX(0.9087);transform-origin:left 0;">Arkusz 1 z 1</div>
<div class="t" style="left:421px;top:712.84px;font-size:12px;color:#000;font-weight:normal;transform:scaleX(0.9240);transform-origin:left 0;">PageStyle_Raport</div>
<div class="t" style="left:691px;top:712.84px;font-size:12px;color:#000;font-weight:normal;transform:scaleX(0.9058);transform-origin:left 0;">Polski</div>
<div class="t" style="left:1026px;top:712.84px;font-size:12px;color:#000;font-weight:normal;transform:scaleX(0.9256);transform-origin:left 0;">Średnia: ; Suma: 0</div>
<div class="t" style="left:1334px;top:712.84px;font-size:12px;color:#000;font-weight:normal;transform:scaleX(0.8739);transform-origin:left 0;">68%</div>
<div class="a" style="left:0px;top:728px;width:1366px;height:40px;background:#f1dfd6;"></div>
<div class="a" style="left:294px;top:728px;width:44px;height:40px;background:#f7eeea;"></div>
<div class="a" style="left:338px;top:728px;width:1px;height:40px;background:#cdbcb4;"></div>
<div class="a" style="left:339px;top:728px;width:3px;height:40px;background:#f1e6e1;"></div>
<div class="a" style="left:200px;top:766px;width:40px;height:2px;background:#0a6cd0;"></div>
<div class="a" style="left:249px;top:766px;width:40px;height:2px;background:#0a6cd0;"></div>
<div class="a" style="left:294px;top:766px;width:48px;height:2px;background:#0a6cd0;"></div>
<div class="a" style="left:347px;top:766px;width:40px;height:2px;background:#0a6cd0;"></div>
<div class="t" style="left:1044px;top:741.30px;font-size:15px;color:#000;font-weight:normal;transform:scaleX(0.9290);transform-origin:left 0;">Zimne dni przed nami</div>
<div class="t" style="left:1079.7px;width:400px;text-align:center;top:733.14px;font-size:12px;color:#000;font-weight:normal;transform:scaleX(0.8658);transform-origin:center 0;">10:07</div>
<div class="t" style="left:1079.8px;width:400px;text-align:center;top:750.84px;font-size:12px;color:#000;font-weight:normal;transform:scaleX(0.8874);transform-origin:center 0;">21.01.2026</div>
<svg style="left:0;top:0" width="1366" height="768" viewBox="0 0 1366 768"><path d="M4.5 3H12.3L17 7.7V17Q17 19 15 19H5Q3 19 3 17V5Q3 3 4.5 3Z" fill="#3dbb48"/><path d="M12.3 3L17 7.7H12.3Z" fill="#b6f28f"/><rect x="6" y="9" width="7" height="5" fill="#fff"/><rect x="7" y="10.3" width="2" height="1" fill="#3dbb48"/><rect x="10" y="10.3" width="2" height="1" fill="#3dbb48"/><rect x="7" y="12.3" width="2" height="1" fill="#3dbb48"/><rect x="9.2" y="11.2" width="4.8" height="3.8" fill="#b6f28f"/><rect x="10.3" y="12" width="1" height="2.4" fill="#3dbb48"/><rect x="12.3" y="12.4" width="1" height="2" fill="#3dbb48"/><rect x="1245" y="10" width="10" height="1" fill="#000"/><rect x="1290.5" y="7.5" width="7" height="7" fill="none" stroke="#000" stroke-width="1"/><path d="M1292.5 7.5V5.5H1299.5V12.5H1297.5" fill="none" stroke="#000" stroke-width="1"/><path d="M1336 5L1346 15M1346 5L1336 15" stroke="#000" stroke-width="1.05"/><rect x="1341" y="134.8" width="10" height="1.1" fill="#3c3c3c"/><rect x="1341" y="137.8" width="10" height="1.1" fill="#3c3c3c"/><rect x="1341" y="141.0" width="10" height="1.1" fill="#3c3c3c"/><rect x="1336.5" y="159.5" width="19" height="19" rx=".8" fill="#fafafa" stroke="#3c3c3c" stroke-width="1.1"/><rect x="1336" y="159" width="20" height="3.3" fill="#6a6a6a"/><rect x="1340" y="167.8" width="12" height="1" fill="#3c3c3c"/><rect x="1340" y="171.8" width="12" height="1" fill="#3c3c3c"/><circle cx="1347.5" cy="168.3" r="1.5" fill="#1e8bcd"/><circle cx="1344.5" cy="172.3" r="1.6" fill="#fafafa" stroke="#1e8bcd" stroke-width="1"/><path d="M1336.8 209.5L1341.8 194H1343L1348 208M1338.6 204H1346.2" fill="none" stroke="#3c3c3c" stroke-width="1.7"/><path d="M1345.5 208L1354 200Q1356 198.8 1356.5 200.3Q1356.7 201.5 1355 203L1347 210" fill="#fafafa" stroke="#3c3c3c" stroke-width="1"/><path d="M1341 214.5Q1341.5 210 1344.7 208.5L1347.5 210.3Q1347 213.8 1341 214.5Z" fill="#9cc9ef" stroke="#1a6fc8" stroke-width="1"/><path d="M1335.5 246.5V229.5H1341L1343 231.5H1351.5V236" fill="#fafafa" stroke="#e8812b" stroke-width="1.1"/><path d="M1338 235.5H1357.5L1355.5 246.5H1335.5Z" fill="#f7d98b" stroke="#e8812b" stroke-width="1.1"/><rect x="1343.5" y="236.5" width="12.5" height="12" fill="#fafafa" stroke="#3c3c3c" stroke-width="1.2"/><circle cx="1347" cy="239.6" r="1.1" fill="none" stroke="#e8812b" stroke-width=".8"/><path d="M1344 248L1348 244L1350 245.5L1352.5 242.5L1355.5 245.5V248Z" fill="#7db7e8" stroke="#1b6cb8" stroke-width=".8"/><circle cx="1346" cy="273.5" r="9.3" fill="#fafafa" stroke="#3c3c3c" stroke-width="1.1"/><path d="M1340.5 279L1343 271.3L1351.5 268L1349 275.7Z" fill="#1e88d4"/><circle cx="1346" cy="273.5" r="1.3" fill="#fafafa"/><path d="M1349 301Q1347 299 1344.5 300.5Q1342.8 302 1342.2 306.5L1340.3 316.5Q1339.6 319.5 1337.6 318.5" fill="none" stroke="#2b8fd6" stroke-width="1.8" stroke-linecap="round"/><circle cx="1348.8" cy="301.3" r="1.3" fill="#2b8fd6"/><circle cx="1337.8" cy="318.3" r="1.3" fill="#2b8fd6"/><path d="M1340 307H1346.5" stroke="#2b8fd6" stroke-width="1.5"/><path d="M1345 308.5Q1347 307.5 1348.2 309.5L1350.5 316Q1351.8 318 1353.8 316.5M1354.5 308L1345.5 318" fill="none" stroke="#2b8fd6" stroke-width="1.7" stroke-linecap="round"/><path d="M1306.3 176L1309.5 172.5L1312.7 176" fill="none" stroke="#555" stroke-width="1.9"/><path d="M1306.5 656.5L1309.5 659.8L1312.5 656.5" fill="none" stroke="#555" stroke-width="1.9"/><path d="M1318.5 410.5L1323.5 414L1318.5 417.5Z" fill="#fff"/><path d="M10.5 672L6.8 675.5L10.5 679" fill="none" stroke="#555" stroke-width="1.8"/><path d="M1285.8 672L1289.8 675.5L1285.8 679" fill="none" stroke="#555" stroke-width="1.9"/><rect x="1296" y="667" width="5" height="17" fill="#a0a0a0"/><rect x="1298" y="671" width="1.2" height="9" fill="#000"/><rect x="13.2" y="688.5" width="1" height="11" fill="#a0a0a0"/><path d="M20.2 688.5V699.5L15 694Z" fill="#a0a0a0"/><path d="M41.5 689V699L36 694Z" fill="#a0a0a0"/><path d="M57 688.5V700L63 694.2Z" fill="#a0a0a0"/><path d="M78 688.5V699.5L83.5 694Z" fill="#a0a0a0"/><rect x="85.2" y="688.5" width="1" height="11" fill="#a0a0a0"/><rect x="109.2" y="688" width="2.6" height="13" fill="#000"/><rect x="104" y="693.2" width="13" height="2.6" fill="#000"/><path d="M10.5 709.5H24L25.5 711V723.5H12L10.5 722Z" fill="none" stroke="#a8a8a8" stroke-width="1"/><rect x="13.5" y="709.5" width="9" height="4.5" fill="none" stroke="#a8a8a8" stroke-width="1"/><rect x="13.5" y="717.5" width="9" height="6" fill="none" stroke="#a8a8a8" stroke-width="1"/><rect x="15.5" y="719" width="1.2" height="4.5" fill="#a8a8a8"/><rect x="864.5" y="710.5" width="16.5" height="10.5" rx="1" fill="none" stroke="#2a86d6" stroke-width="1.1"/><path d="M885.5 709.5H890.5M888 709.5V724M885.5 724H890.5" fill="none" stroke="#222" stroke-width="1.1"/><rect x="1191" y="717" width="10" height="2" fill="#333"/><rect x="1309" y="717" width="10" height="2" fill="#333"/><rect x="1313" y="713" width="2" height="10" fill="#333"/><rect x="1206" y="717.4" width="98" height="1.3" fill="#707070"/><rect x="1253.5" y="715.5" width="1.5" height="5" fill="#707070"/><rect x="1233.5" y="713.5" width="3" height="8.5" rx=".8" fill="#e6e6e6" stroke="#555" stroke-width="1"/><path d="M15.8 741.2L22.3 740.3V747.5H15.8Z M23.3 740.1L32.3 738.9V747.5H23.3Z M15.8 748.5H22.3V755.7L15.8 754.8Z M23.3 748.5H32.3V757L23.3 755.9Z" fill="#000"/><circle cx="73.8" cy="745.7" r="7.6" fill="none" stroke="#000" stroke-width="1.7"/><path d="M64 757.8L68.6 753.2" stroke="#000" stroke-width="1.9" stroke-linecap="round"/><path d="M112 740.5V742.5H124V740.5M112 755.5V753.5H124V755.5" fill="none" stroke="#000" stroke-width="1.1"/><rect x="112.5" y="745" width="11" height="6" fill="none" stroke="#000" stroke-width="1.1"/><rect x="126.5" y="740.2" width="1" height="3" fill="#000"/><rect x="126" y="744.3" width="2" height="2.2" fill="#000"/><rect x="126.5" y="748" width="1" height="7.5" fill="#000"/><defs><linearGradient id="edg" x1="0" y1="0" x2="1" y2="1"><stop offset="0" stop-color="#2aaee8"/><stop offset=".5" stop-color="#2cbfc9"/><stop offset="1" stop-color="#5fdc55"/></linearGradient><linearGradient id="edb" x1="0" y1="0" x2="0" y2="1"><stop offset="0" stop-color="#1b8fe0"/><stop offset="1" stop-color="#0a6cc6"/></linearGradient><linearGradient id="lo" x1="0" y1="0" x2="0" y2="1"><stop offset="0" stop-color="#4fc24c"/><stop offset="1" stop-color="#0c9a3a"/></linearGradient></defs><path d="M159.3 746A12.1 12.1 0 0 1 183.1 748.5Q183 752.4 178.5 752.5L174 752.3Q172.3 750.5 173 748Q172.5 743.5 167 743Q161.5 743 159.3 746Z" fill="url(#edg)"/><path d="M159.3 746Q161.5 743 167 743Q172.5 743.5 173 748L170 746.5Q166.5 746.8 166.3 751Q166.5 757 173 759.3Q178.5 760.6 181.8 754.8A12.1 12.1 0 0 1 159.3 746Z" fill="url(#edb)"/><path d="M166.3 748.5Q165.8 755.5 172 758.6Q177.8 760.8 181.8 754.8Q180 754 176.5 754.3Q171.5 754.3 169.5 751.5Q168.2 749.5 168.7 747.3Q167 747 166.3 748.5Z" fill="#0d4f9e"/><ellipse cx="170.8" cy="748.8" rx="2.4" ry="2.9" fill="#f1dfd6"/><path d="M220 748L209.6 742A12 12 0 0 1 230.4 742Z" fill="#db4437"/><path d="M220 748L230.4 742A12 12 0 0 1 220 760Z" fill="#fcc934"/><path d="M220 748L220 760A12 12 0 0 1 209.6 742Z" fill="#1e9e4a"/><circle cx="220" cy="748" r="5.6" fill="#fff"/><circle cx="220" cy="748" r="4.4" fill="#3b7ded"/><path d="M258 740Q258 739 259 739H267L269 741H279.3V756H258Z" fill="#e8a50c"/><rect x="258" y="742" width="21.3" height="14" fill="#ffd258"/><path d="M262.5 757V750.5H275.5V757H272V753.2H266V757Z" fill="#2f86d6"/><path d="M310 735.7H321L328 742.7V757.8Q328 759.8 326 759.8H310Q308 759.8 308 757.8V737.7Q308 735.7 310 735.7Z" fill="url(#lo)"/><path d="M321 735.7H328V742.7Z" fill="#75f05e"/><path d="M321 735.7L328 742.7" stroke="#fff" stroke-width=".8"/><rect x="312" y="745.5" width="10" height="6.5" fill="#fff"/><rect x="315" y="745.5" width=".8" height="6.5" fill="#31ae44"/><rect x="318.3" y="745.5" width=".8" height="6.5" fill="#31ae44"/><rect x="312" y="748.5" width="10" height=".8" fill="#31ae44"/><rect x="317" y="749.5" width="7" height="5" fill="#9be87e"/><rect x="318.5" y="751" width="1" height="3" fill="#31ae44"/><rect x="321" y="750.5" width="1" height="3.5" fill="#31ae44"/><path d="M356 753.5Q354.3 748.5 357.5 744.5Q361.5 740 368.5 740Q375.5 740.3 377 745.5Q378 751.5 372.5 755.5Q367.5 758.5 362.5 757.5Q360.3 757 360.6 755Q361 753.3 359.5 753.2Q357.5 753.5 357 754.5Q356.3 754.5 356 753.5Z" fill="#d3e7f5" stroke="#86b8da" stroke-width=".9"/><circle cx="359.1" cy="749.3" r="1.9" fill="#e23b3b"/><circle cx="362.7" cy="745.2" r="1.8" fill="#47b04b"/><circle cx="367.6" cy="743.6" r="2" fill="#f6b21c"/><ellipse cx="365" cy="750.6" rx="1.6" ry="1.4" fill="#f3f3f3" stroke="#6a9fcf" stroke-width=".8"/><path d="M366.5 759.5L373.5 745" stroke="#e8852a" stroke-width="2.3" stroke-linecap="round"/><path d="M373.3 745.5L375 741" stroke="#9a9a9a" stroke-width="1.6"/><ellipse cx="375.7" cy="738.8" rx="2.6" ry="2.2" fill="#c9a36a"/><path d="M1013 741.5H1021L1020 746L1019.3 743.5L1018 748.5L1016.5 743.5L1015 746L1014 743Z" fill="#6fb1ea"/><rect x="1022.5" y="737" width="7" height="16" rx="3.5" fill="#cfe7f8"/><rect x="1024.5" y="739" width="3" height="13" rx="1.5" fill="#aab7c4"/><rect x="1024.5" y="744" width="3" height="9" fill="#1a9ae0"/><circle cx="1026" cy="754.5" r="4.3" fill="#cfe7f8"/><circle cx="1026" cy="754.5" r="3.2" fill="#1a78d0"/><path d="M1205.5 750.5L1211 744.8L1216.5 750.5" fill="none" stroke="#000" stroke-width="1.1"/><path d="M1229.3 741.8V744.5M1232 741.8V744.5M1227.7 744.5H1233.5V747Q1233.5 749.5 1230.5 749.5Q1227.7 749.5 1227.7 747ZM1230.6 749.5V753" fill="none" stroke="#000" stroke-width="1"/><rect x="1234.5" y="744.5" width="7.5" height="8" fill="none" stroke="#000" stroke-width="1"/><rect x="1242" y="747" width="1.2" height="3" fill="#000"/><path d="M1235 752L1237.5 749V752Z" fill="#000"/><path d="M1324.8 740H1341V753H1330L1327 756V753H1324.8Z" fill="#000"/><rect x="1327.5" y="743.3" width="10" height="1" fill="#fff"/><rect x="1327.5" y="746" width="10" height="1" fill="#fff"/><rect x="1327.5" y="748.7" width="7" height="1" fill="#fff"/><circle cx="1340.4" cy="755.5" r="6.7" fill="#cfcfcf" stroke="#8a8a8a" stroke-width="1"/><text x="1340.4" y="759.6" text-anchor="middle" font-family="Liberation Sans" font-size="11" fill="#000">2</text><rect x="1361" y="728" width="1" height="40" fill="#c9bab3"/></svg>
</body></html>
